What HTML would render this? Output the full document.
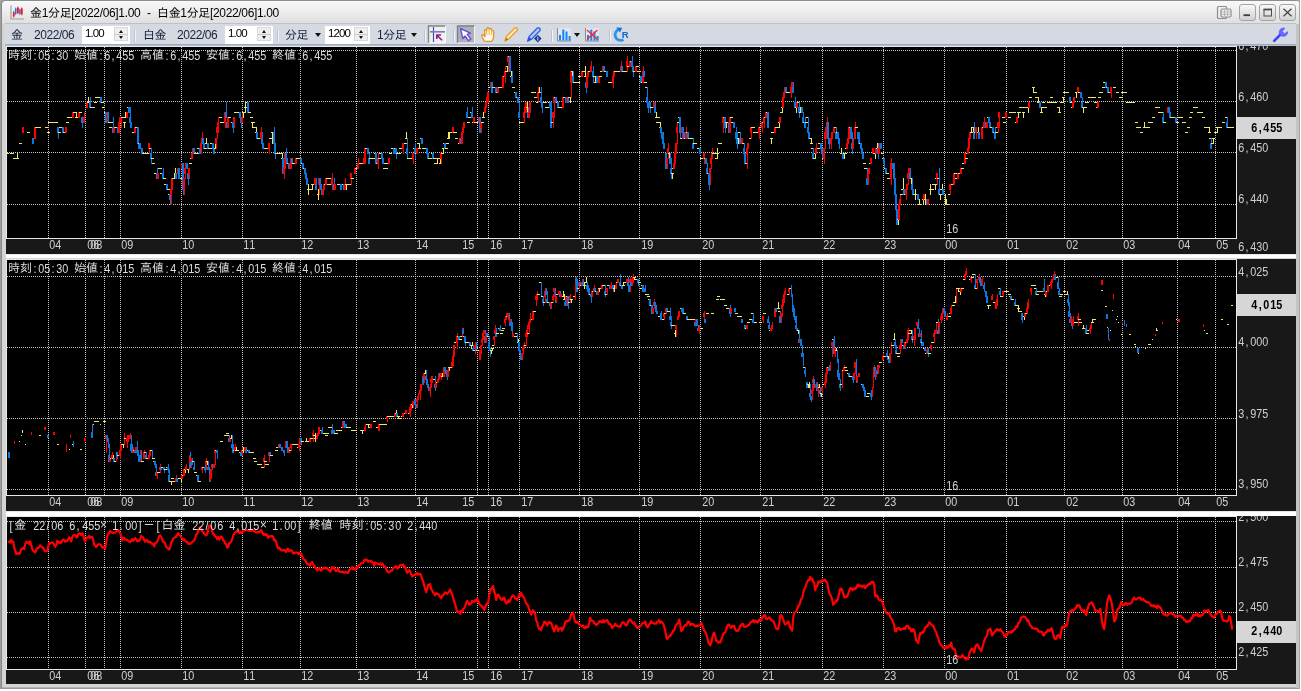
<!DOCTYPE html>
<html lang="ja"><head><meta charset="utf-8"><title>金1分足</title>
<style>
html,body{margin:0;padding:0}
body{width:1301px;height:691px;position:relative;overflow:hidden;background:#fff;font-family:"Liberation Sans","IPAGothic",sans-serif}
#win{position:absolute;left:0;top:0;width:1300px;height:689px;box-sizing:border-box;border-radius:5px 3px 0 0;background:#d4d4d4;box-shadow:inset 1px 0 0 #9e9e9e,inset 2px 0 0 #888,inset -1px 0 0 #a6a6a6,inset 0 1px 0 #8e8e8e,inset 0 -1px 0 #9a9a9a,inset 0 -2px 0 #b4b4b4}
#win2{position:absolute;left:1296px;top:24px;width:3px;height:664px;background:#c4c4c4}
.hsep{position:absolute;left:6px;width:1290px;height:4px;background:#fff;border-top:1px solid #e8e8e8;box-sizing:border-box}
#title{position:absolute;left:2px;top:1px;width:1297px;height:23px;background:linear-gradient(#f8f8f8,#efefef 40%,#dedede);border-radius:4px 2px 0 0}
#title .tx{position:absolute;left:30px;top:5px;font-size:12px;line-height:15px;color:#000;white-space:nowrap;letter-spacing:-0.34px}
#tb{position:absolute;left:5px;top:23px;width:1291px;height:20px;background:#d4d9e2;border-top:1px solid #bcc0c8;border-bottom:1px solid #9caac4;box-sizing:content-box}
#tbl{position:absolute;left:5px;top:45px;width:1291px;height:1px;background:#b4bed0}
.a{position:absolute}
.tx,.tbt,.spin span,.hd,.t,.tag{will-change:transform}
.clip{position:absolute;left:0;top:0;width:1301px;height:691px}
.tbt{position:absolute;top:28px;font-size:12px;line-height:14px;color:#1a2038;white-space:nowrap;letter-spacing:-0.45px}
.spin{position:absolute;top:26px;height:18px;background:#fff;box-sizing:border-box;font-size:11.5px;line-height:12px;letter-spacing:-0.9px;color:#000}
.spin span{position:absolute;left:3px;top:1px}
.spin i{position:absolute;right:2px;top:1px;width:14px;height:14px;background:#efefef;border:1px solid #d8d8d8;box-sizing:border-box}
.spin i:after{content:"";position:absolute;left:0;right:0;top:6px;height:1px;background:#c8c8c8}
.spin b{position:absolute;left:3.5px;width:0;height:0;border-left:2.5px solid transparent;border-right:2.5px solid transparent}
.spin b.u{top:1.5px;border-bottom:3.5px solid #111}
.spin b.d{top:7.5px;border-top:3.5px solid #111}
.sep{position:absolute;top:30px;width:1px;height:12px;background:#f2f4f8;box-shadow:-1px 0 0 #bcc2ce}
.dd{position:absolute;top:33px;width:0;height:0;border-left:3px solid transparent;border-right:3px solid transparent;border-top:4px solid #111}
.t{position:absolute;font-family:"Liberation Sans","IPAGothic",sans-serif;font-size:12px;color:#d0d0d0;line-height:12px;white-space:nowrap}
.t i,.hd i,.tag i{display:inline-block;width:6px;text-align:center;font-style:normal;transform:scaleX(0.9)}
.tag i{width:6.4px}
.tag{position:absolute;left:1237px;width:59px;height:22px;line-height:22px;text-align:center;font-family:"Liberation Sans","IPAGothic",sans-serif;font-size:12px;font-weight:bold;color:#000;white-space:nowrap}
.hd{position:absolute;left:7.5px;font-family:"Liberation Mono","IPAGothic",monospace;color:#dedede;line-height:13px;height:13px;white-space:pre;display:flex}
.hd .j{display:block;font-size:12px;overflow:visible;flex:none}
.hd .l{display:block;font-size:12px;flex:none;overflow:visible;font-family:"Liberation Sans","IPAGothic",sans-serif}
.wb{position:absolute;top:4px;width:17px;height:17px;box-sizing:border-box;border:1px solid #a4a4a4;border-radius:3px;background:linear-gradient(#f8f8f8,#e4e4e4 50%,#d2d2d2)}
</style></head><body>
<div class="a" style="left:0;top:0;width:8px;height:8px;background:#a4a4a4"></div><div class="a" style="left:1292px;top:0;width:8px;height:8px;background:#a4a4a4"></div><div id="win"></div><div id="win2"></div><div class="hsep" style="top:254px"></div><div class="hsep" style="top:511px;height:5px"></div>
<div id="title"><span class="tx" style="left:28px">金1分足[2022/06]1.00</span><span class="tx" style="left:145px">-</span><span class="tx" style="left:155px">白金1分足[2022/06]1.00</span></div>
<div id="tb"></div><div id="tbl"></div>
<span class="tbt" style="left:11px">金</span><span class="tbt" style="left:34px">2022/06</span>
<div class="spin" style="left:82px;width:48px"><span>1.00</span><i><b class="u"></b><b class="d"></b></i></div><span class="sep" style="left:135px"></span>
<span class="tbt" style="left:143px">白金</span><span class="tbt" style="left:177px">2022/06</span>
<div class="spin" style="left:225px;width:48px"><span>1.00</span><i><b class="u"></b><b class="d"></b></i></div><span class="sep" style="left:278px"></span>
<span class="tbt" style="left:285px">分足</span><span class="dd" style="left:315px"></span>
<div class="spin" style="left:325px;width:45px"><span>1200</span><i><b class="u"></b><b class="d"></b></i></div>
<span class="tbt" style="left:377px">1分足</span><span class="dd" style="left:411px"></span>
<span class="sep" style="left:425px"></span><span class="sep" style="left:454px"></span><span class="sep" style="left:552px"></span><span class="sep" style="left:610px"></span>
<span class="dd" style="left:574px"></span>
<svg class="a" style="left:0;top:0" width="1301" height="46" viewBox="0 0 1301 46">
<!-- app icon -->
<g>
<path d="M11 5.500V19H24" stroke="#a0a0a0" stroke-width="1.2" fill="none"/>
<path d="M13.8 10.5L14.700000000000001 12.7V15.8L13.8 18L12.9 15.8V12.7Z" fill="#ff1020"/><path d="M15.7 7L16.5 9.2V13.3L15.7 15.5L14.899999999999999 13.3V9.2Z" fill="#1080e8"/><path d="M17.9 6L18.849999999999998 8.2V12.3L17.9 14.5L16.95 12.3V8.2Z" fill="#ff1020"/><path d="M19.9 8L20.7 10.2V13.3L19.9 15.5L19.099999999999998 13.3V10.2Z" fill="#1080e8"/><path d="M21.8 7L22.75 9.2V13.600000000000001L21.8 15.8L20.85 13.600000000000001V9.2Z" fill="#ff1020"/>
</g>
<!-- window buttons -->
<g fill="none" stroke="#8e8e8e" stroke-width="1.2">
<rect x="1217.5" y="6.5" width="9" height="12" rx="1"/>
<rect x="1221" y="9" width="10" height="8" rx="1.5" fill="#ececec"/>
<path d="M1222 12H1230M1222 14.5H1230M1224.5 10V16M1227.5 10V16" stroke-width="0.5"/>
</g>
</svg>
<div class="wb" style="left:1239px"></div><div class="wb" style="left:1259px"></div><div class="wb" style="left:1279px"></div>
<svg class="a" style="left:0;top:0" width="1301" height="46" viewBox="0 0 1301 46">
<path d="M1243.5 15.2H1250" stroke="#3c3c3c" stroke-width="1.8"/>
<rect x="1264" y="9.5" width="7.500" height="6.5" fill="none" stroke="#4a4a4a" stroke-width="1"/><path d="M1263.5 9.5H1272" stroke="#4a4a4a" stroke-width="1.8"/>
<path d="M1283.5 8.8L1291.5 16.2M1291.5 8.8L1283.5 16.2" stroke="#444" stroke-width="1.25"/>
<!-- wrench -->
<g transform="translate(1273,27)">
<path d="M1.2 13.8 L8 7" stroke="#4040ff" stroke-width="2.6" stroke-linecap="round"/>
<path d="M11.8 1.2 A4.2 4.2 0 1 0 14.6 4.6 L11.6 6.8 L9.2 4.6 Z" fill="#6868ff" stroke="#4a4aff" stroke-width="0.6"/>
</g>
<!-- crosshair button -->
<g>
<rect x="428.5" y="26" width="17" height="17" fill="#f1f0e4"/>
<path d="M428.5 43V26H445.5" stroke="#80848c" stroke-width="1.4" fill="none"/>
<path d="M445.5 26V43H428.5" stroke="#fafafa" stroke-width="1" fill="none"/>
<path d="M433.5 27V42" stroke="#4848b8" stroke-width="1.2"/><path d="M430 31.8H445" stroke="#7878d0" stroke-width="1.6"/>
<path d="M436.5 35 H441 M436.8 34.6 V39 M437 35.2 L442 40.2" stroke="#9018a8" stroke-width="1.6" fill="none"/>
</g>
<!-- pointer button selected -->
<g>
<rect x="457.5" y="26" width="17" height="17" fill="#aeb1b6"/>
<path d="M457.5 43V26H474.500" stroke="#7c8088" stroke-width="1.4" fill="none"/>
<path d="M474.500 26V43H457.5" stroke="#f4f4f4" stroke-width="1" fill="none"/>
<path d="M460.5 28.5 L462.8 38.5 L465 36 L468.600 40.800 L470.800 39 L467.200 34.400 L470.400 33.200 Z" fill="#fff" stroke="#6a4cd8" stroke-width="1.4" stroke-linejoin="round"/>
</g>
<!-- hand -->
<g transform="translate(481,27)">
<path d="M3.400 14.200 C2 11.500 0.600 9.800 0.800 8.200 C1.600 7 3 8 4 9.600 L3.600 3.600 C3.700 2.200 5.400 2.200 5.600 3.600 L5.900 1.600 C6.200 0.300 7.800 0.300 8 1.600 L8.300 2.200 C8.800 1 10.300 1.200 10.400 2.600 L10.700 4 C11.300 3 12.700 3.400 12.700 4.800 L12.600 9.600 C12.500 12 11.600 13.400 10.800 14.400 Z" fill="#fff8ec" stroke="#e0921c" stroke-width="1.3" stroke-linejoin="round"/>
<path d="M5.700 3.800V8M8.100 2.400V8M10.500 3.600V8.200" stroke="#e8a848" stroke-width="0.9" fill="none"/>
</g>
<!-- pencil -->
<g transform="translate(504,27)">
<path d="M1 14 L2.400 9.600 L11 1 C12.300 0.200 14 1.800 13.200 3.200 L4.800 11.800 Z" fill="#fff4e0" stroke="#f0a028" stroke-width="1.5" stroke-linejoin="round"/>
<path d="M1 14 L2.200 10.400 L4.200 12.400Z" fill="#b07018"/>
</g>
<!-- marker -->
<g transform="translate(527,27)">
<path d="M0.600 14.200 L2.200 9.400 L10.400 1 C11.800 0 14 2 13 3.400 L5 11.800 Z" fill="#b8ccf8" stroke="#3468e0" stroke-width="1.5" stroke-linejoin="round"/>
<path d="M0.600 14.200 L2.200 10 L4.600 12.200Z" fill="#2050c0"/>
<path d="M10.800 7.800 L14.600 11.600 L10.800 15.400 L7 11.600Z" fill="#183c90"/><path d="M10.800 9.600V13.600" stroke="#dfe8ff" stroke-width="0.9"/>
</g>
<!-- bars icon -->
<g>
<rect x="557" y="28" width="14" height="13" fill="#e4e6ea"/>
<path d="M557.500 28V41H571" stroke="#8a8a8a" stroke-width="1" fill="none"/>
<path d="M560 40.500V35 M563.300 40.500V29.500 M566.500 40.500V31.500 M569.600 40.500V36" stroke="#1484ff" stroke-width="2"/>
</g>
<g>
<rect x="585" y="28" width="14" height="13" fill="#e4e6ea"/>
<path d="M585.500 28V41H599" stroke="#8a8a8a" stroke-width="1" fill="none"/>
<path d="M588 40.500V35 M591.300 40.500V29.500 M594.500 40.500V31.500 M597.600 40.500V36" stroke="#1484ff" stroke-width="2"/>
<path d="M587 30L597.500 39.500M597.500 30L587 39.500" stroke="#ff2828" stroke-width="1.4"/>
</g>
<!-- refresh -->
<g transform="translate(614,27)">
<path d="M9.500 12.600 A5.600 5.600 0 1 1 6.200 2.200" fill="none" stroke="#2696e8" stroke-width="2.800"/>
<path d="M2.200 0.400 L8.200 0.800 L6 5.400Z" fill="#2070e0"/>
<text x="7.800" y="11" font-family="Liberation Sans, sans-serif" font-weight="bold" font-size="9.500" fill="#1464c8">R</text>
</g>
</svg>

<svg width="1301" height="691" viewBox="0 0 1301 691" style="position:absolute;left:0;top:0;filter:blur(0.4px)" shape-rendering="crispEdges">
<rect x="6" y="46" width="1290" height="208" fill="#181818"/>
<rect x="6.5" y="46.5" width="1230" height="192" fill="#000" stroke="#e8e8e8" stroke-width="1"/>
<path d="M48.5 47V238M85.5 47V238M104.5 47V238M120.5 47V238M181.5 47V238M242.5 47V238M300.5 47V238M356.5 47V238M415.5 47V238M477.5 47V238M488.5 47V238M519.5 47V238M579.5 47V238M639.5 47V238M700.5 47V238M760.5 47V238M822.5 47V238M883.5 47V238M944.5 47V238M1006.5 47V238M1064.5 47V238M1122.5 47V238M1177.5 47V238M1215.5 47V238M7 50.5H1236M7 101.5H1236M7 152.5H1236M7 204.5H1236" stroke="#c4c4c4" stroke-width="1" stroke-dasharray="1 1" fill="none"/>
<rect x="6" y="259" width="1290" height="252" fill="#181818"/>
<rect x="6.5" y="259.5" width="1230" height="236" fill="#000" stroke="#e8e8e8" stroke-width="1"/>
<path d="M48.5 260V495M85.5 260V495M104.5 260V495M120.5 260V495M181.5 260V495M242.5 260V495M300.5 260V495M356.5 260V495M415.5 260V495M477.5 260V495M488.5 260V495M519.5 260V495M579.5 260V495M639.5 260V495M700.5 260V495M760.5 260V495M822.5 260V495M883.5 260V495M944.5 260V495M1006.5 260V495M1064.5 260V495M1122.5 260V495M1177.5 260V495M1215.5 260V495M7 276.5H1236M7 347.5H1236M7 418.5H1236M7 489.5H1236" stroke="#c4c4c4" stroke-width="1" stroke-dasharray="1 1" fill="none"/>
<rect x="6" y="516" width="1290" height="168" fill="#181818"/>
<rect x="6.5" y="516.5" width="1230" height="153" fill="#000" stroke="#e8e8e8" stroke-width="1"/>
<path d="M48.5 517V669M85.5 517V669M104.5 517V669M120.5 517V669M181.5 517V669M242.5 517V669M300.5 517V669M356.5 517V669M415.5 517V669M477.5 517V669M488.5 517V669M519.5 517V669M579.5 517V669M639.5 517V669M700.5 517V669M760.5 517V669M822.5 517V669M883.5 517V669M944.5 517V669M1006.5 517V669M1064.5 517V669M1122.5 517V669M1177.5 517V669M1215.5 517V669M7 521.5H1236M7 567.5H1236M7 612.5H1236M7 657.5H1236" stroke="#c4c4c4" stroke-width="1" stroke-dasharray="1 1" fill="none"/>
<path d="M6 153h3v1h-3zM10 153h3v1h-3zM11 153h3v1h-3zM13 158h3v1h-3zM14 158h3v1h-3zM17 153h1v6h-1zM16 158h3v1h-3zM19 143h3v1h-3z" fill="#f0e868"/><path d="M23 127h1v6h-1zM22 127h2v6h-2z" fill="#ff0000"/><path d="M27 132h3v1h-3z" fill="#f0e868"/><path d="M33 138h1v6h-1zM32 138h2v6h-2z" fill="#0a78e0"/><path d="M35 127h1v12h-1zM34 127h2v12h-2z" fill="#ff0000"/><path d="M35 127h3v1h-3zM37 127h3v1h-3zM38 127h3v1h-3zM45 127h3v1h-3zM47 132h3v1h-3zM48 122h3v1h-3zM51 122h3v1h-3zM52 122h3v1h-3zM53 122h3v1h-3zM54 122h3v1h-3zM55 122h3v1h-3z" fill="#f0e868"/><path d="M58 127h1v12h-1zM57 127h2v6h-2z" fill="#0a78e0"/><path d="M58 132h3v1h-3zM59 127h3v1h-3zM61 127h3v1h-3z" fill="#f0e868"/><path d="M63 127h1v6h-1zM62 127h2v6h-2z" fill="#0a78e0"/><path d="M63 132h3v1h-3zM64 132h3v1h-3z" fill="#f0e868"/><path d="M66 127h1v6h-1zM65 127h2v6h-2z" fill="#ff0000"/><path d="M66 122h3v1h-3zM67 117h3v1h-3zM68 117h3v1h-3zM69 117h3v1h-3zM70 117h3v1h-3zM71 117h3v1h-3z" fill="#f0e868"/><path d="M73 112h1v6h-1zM72 112h2v6h-2z" fill="#ff0000"/><path d="M73 112h3v1h-3zM76 112h1v6h-1zM75 117h3v1h-3z" fill="#f0e868"/><path d="M79 112h1v6h-1zM78 112h2v6h-2z" fill="#ff0000"/><path d="M79 112h3v1h-3z" fill="#f0e868"/><path d="M82 117h1v11h-1zM81 117h2v6h-2z" fill="#0a78e0"/><path d="M84 112h1v11h-1zM83 117h2v6h-2z" fill="#ff0000"/><path d="M85 107h3v1h-3z" fill="#f0e868"/><path d="M87 102h1v6h-1zM86 102h2v6h-2z" fill="#ff0000"/><path d="M88 97h1v6h-1zM87 102h3v1h-3zM88 102h3v1h-3z" fill="#f0e868"/><path d="M90 97h1v11h-1zM89 102h2v6h-2z" fill="#0a78e0"/><path d="M90 107h3v1h-3zM91 107h3v1h-3zM92 107h3v1h-3zM94 102h3v1h-3zM95 97h3v1h-3zM96 97h3v1h-3zM97 97h3v1h-3zM99 97h3v1h-3z" fill="#f0e868"/><path d="M101 97h1v6h-1zM100 97h2v6h-2z" fill="#0a78e0"/><path d="M101 102h3v1h-3zM102 107h3v1h-3zM104 112h3v1h-3z" fill="#f0e868"/><path d="M106 112h1v11h-1zM105 112h2v11h-2z" fill="#0a78e0"/><path d="M107 112h1v11h-1zM106 112h2v6h-2z" fill="#ff0000"/><path d="M108 112h1v11h-1zM107 112h2v6h-2z" fill="#0a78e0"/><path d="M108 122h3v1h-3zM109 127h3v1h-3zM110 122h3v1h-3zM111 122h3v1h-3z" fill="#f0e868"/><path d="M113 117h1v16h-1zM112 127h2v6h-2z" fill="#0a78e0"/><path d="M114 127h1v6h-1zM113 127h2v6h-2z" fill="#ff0000"/><path d="M114 127h3v1h-3zM116 127h3v1h-3z" fill="#f0e868"/><path d="M118 127h1v6h-1zM117 127h2v6h-2z" fill="#0a78e0"/><path d="M119 117h1v16h-1zM118 122h2v11h-2zM121 117h1v11h-1zM120 117h2v6h-2z" fill="#ff0000"/><path d="M121 117h3v1h-3zM124 122h1v6h-1zM123 122h3v1h-3zM125 112h1v6h-1zM124 117h3v1h-3zM125 117h3v1h-3z" fill="#f0e868"/><path d="M127 112h1v6h-1zM126 112h2v6h-2z" fill="#ff0000"/><path d="M127 107h3v1h-3z" fill="#f0e868"/><path d="M129 107h1v6h-1zM128 107h2v6h-2zM130 107h1v16h-1zM129 117h2v6h-2zM131 122h1v6h-1zM130 122h2v6h-2z" fill="#0a78e0"/><path d="M132 132h3v1h-3zM133 132h3v1h-3z" fill="#f0e868"/><path d="M135 127h1v6h-1zM134 127h2v6h-2z" fill="#ff0000"/><path d="M135 127h3v1h-3zM136 127h3v1h-3z" fill="#f0e868"/><path d="M138 127h1v22h-1zM137 127h2v17h-2z" fill="#0a78e0"/><path d="M138 143h3v1h-3z" fill="#f0e868"/><path d="M140 143h1v6h-1zM139 143h2v6h-2zM142 148h1v6h-1zM141 148h2v6h-2z" fill="#0a78e0"/><path d="M142 153h3v1h-3zM144 153h3v1h-3zM146 153h3v1h-3zM147 153h3v1h-3z" fill="#f0e868"/><path d="M149 143h1v11h-1zM148 143h2v6h-2z" fill="#ff0000"/><path d="M149 148h3v1h-3z" fill="#f0e868"/><path d="M151 148h1v16h-1zM150 153h2v6h-2z" fill="#0a78e0"/><path d="M151 158h3v1h-3zM152 163h3v1h-3zM154 173h3v1h-3z" fill="#f0e868"/><path d="M157 168h1v11h-1zM156 173h2v6h-2z" fill="#0a78e0"/><path d="M158 173h1v6h-1zM157 173h2v6h-2z" fill="#ff0000"/><path d="M158 168h3v1h-3zM159 168h3v1h-3zM160 173h3v1h-3zM161 173h3v1h-3z" fill="#f0e868"/><path d="M163 168h1v11h-1zM162 173h2v6h-2z" fill="#0a78e0"/><path d="M163 178h3v1h-3zM164 184h3v1h-3z" fill="#f0e868"/><path d="M167 184h1v6h-1zM166 184h2v6h-2z" fill="#0a78e0"/><path d="M167 189h3v1h-3zM168 194h3v1h-3z" fill="#f0e868"/><path d="M170 194h1v11h-1zM169 194h2v6h-2z" fill="#0a78e0"/><path d="M171 184h1v21h-1zM170 189h2v6h-2zM172 178h1v12h-1zM171 178h2v12h-2z" fill="#ff0000"/><path d="M172 178h3v1h-3zM174 173h1v6h-1zM173 178h3v1h-3zM175 168h1v6h-1zM174 173h3v1h-3z" fill="#f0e868"/><path d="M176 173h1v6h-1zM175 173h2v6h-2z" fill="#0a78e0"/><path d="M178 168h1v11h-1zM177 168h2v6h-2z" fill="#ff0000"/><path d="M179 168h1v11h-1zM178 168h2v11h-2z" fill="#0a78e0"/><path d="M180 178h3v1h-3z" fill="#f0e868"/><path d="M182 163h1v22h-1zM181 163h2v6h-2z" fill="#ff0000"/><path d="M183 163h1v32h-1zM182 163h2v27h-2z" fill="#0a78e0"/><path d="M184 178h1v17h-1zM183 178h2v12h-2zM185 168h1v11h-1zM184 168h2v6h-2zM186 163h1v6h-1zM185 163h2v6h-2z" fill="#ff0000"/><path d="M187 163h1v6h-1zM186 163h2v6h-2zM188 168h1v17h-1zM187 173h2v6h-2z" fill="#0a78e0"/><path d="M189 168h1v11h-1zM188 168h2v6h-2z" fill="#ff0000"/><path d="M189 163h3v1h-3zM190 158h3v1h-3z" fill="#f0e868"/><path d="M192 153h1v6h-1zM191 153h2v6h-2zM193 148h1v6h-1zM192 148h2v6h-2z" fill="#ff0000"/><path d="M194 148h1v6h-1zM193 148h2v6h-2z" fill="#0a78e0"/><path d="M194 153h3v1h-3zM195 153h3v1h-3zM196 153h3v1h-3zM197 148h3v1h-3z" fill="#f0e868"/><path d="M200 143h1v11h-1zM199 148h2v6h-2z" fill="#0a78e0"/><path d="M201 143h1v11h-1zM200 143h2v6h-2zM202 132h1v12h-1zM201 138h2v6h-2z" fill="#ff0000"/><path d="M203 138h1v6h-1zM202 138h2v6h-2zM204 143h1v6h-1zM203 143h2v6h-2z" fill="#0a78e0"/><path d="M204 148h3v1h-3zM206 138h1v6h-1zM205 143h3v1h-3z" fill="#f0e868"/><path d="M208 143h1v6h-1zM207 143h2v6h-2z" fill="#0a78e0"/><path d="M208 148h3v1h-3zM209 148h3v1h-3zM210 143h3v1h-3zM211 143h3v1h-3z" fill="#f0e868"/><path d="M213 143h1v6h-1zM212 143h2v6h-2zM214 148h1v6h-1zM213 148h2v6h-2z" fill="#0a78e0"/><path d="M215 143h1v6h-1zM214 148h3v1h-3z" fill="#f0e868"/><path d="M216 138h1v11h-1zM215 138h2v6h-2zM217 127h1v12h-1zM216 127h2v6h-2zM218 117h1v16h-1zM217 122h2v6h-2z" fill="#ff0000"/><path d="M219 117h3v1h-3zM220 122h3v1h-3zM221 122h3v1h-3zM222 122h3v1h-3zM223 122h3v1h-3z" fill="#f0e868"/><path d="M225 112h1v16h-1zM224 112h2v11h-2z" fill="#ff0000"/><path d="M226 102h1v16h-1zM225 112h2v6h-2zM227 117h1v11h-1zM226 122h2v6h-2z" fill="#0a78e0"/><path d="M228 117h1v11h-1zM227 117h2v11h-2z" fill="#ff0000"/><path d="M228 117h3v1h-3zM231 122h3v1h-3z" fill="#f0e868"/><path d="M233 122h1v11h-1zM232 122h2v6h-2z" fill="#0a78e0"/><path d="M234 117h1v11h-1zM233 117h2v6h-2z" fill="#ff0000"/><path d="M234 112h3v1h-3zM235 112h3v1h-3zM236 112h3v1h-3zM237 112h3v1h-3zM238 112h3v1h-3z" fill="#f0e868"/><path d="M240 112h1v6h-1zM239 112h2v6h-2zM241 117h1v11h-1zM240 117h2v6h-2z" fill="#0a78e0"/><path d="M242 112h1v11h-1zM241 117h2v6h-2z" fill="#ff0000"/><path d="M243 112h1v6h-1zM242 112h3v1h-3zM243 112h3v1h-3zM245 102h1v11h-1zM244 107h3v1h-3zM245 107h3v1h-3zM247 102h1v6h-1zM246 102h3v1h-3z" fill="#f0e868"/><path d="M248 102h1v11h-1zM247 102h2v11h-2z" fill="#0a78e0"/><path d="M248 112h3v1h-3zM250 117h3v1h-3zM252 122h1v6h-1zM251 122h3v1h-3zM252 122h3v1h-3zM253 127h3v1h-3zM254 127h3v1h-3zM256 127h1v12h-1zM255 132h3v1h-3z" fill="#f0e868"/><path d="M257 132h1v7h-1zM256 132h2v7h-2z" fill="#0a78e0"/><path d="M257 138h3v1h-3zM258 138h3v1h-3zM259 138h3v1h-3z" fill="#f0e868"/><path d="M261 127h1v17h-1zM260 132h2v7h-2z" fill="#ff0000"/><path d="M262 132h1v12h-1zM261 138h2v6h-2zM263 143h1v6h-1zM262 143h2v6h-2z" fill="#0a78e0"/><path d="M264 148h3v1h-3zM266 148h3v1h-3zM267 148h3v1h-3z" fill="#f0e868"/><path d="M269 143h1v11h-1zM268 143h2v6h-2z" fill="#ff0000"/><path d="M269 138h3v1h-3zM272 132h1v12h-1zM271 132h3v1h-3zM272 132h3v1h-3z" fill="#f0e868"/><path d="M274 127h1v17h-1zM273 132h2v12h-2zM275 143h1v16h-1zM274 143h2v11h-2z" fill="#0a78e0"/><path d="M275 153h3v1h-3zM277 153h3v1h-3zM280 153h3v1h-3zM282 153h1v6h-1zM281 158h3v1h-3z" fill="#f0e868"/><path d="M283 158h1v16h-1zM282 158h2v16h-2z" fill="#0a78e0"/><path d="M284 168h1v11h-1zM283 168h2v6h-2zM285 153h1v16h-1zM284 153h2v16h-2z" fill="#ff0000"/><path d="M286 148h1v11h-1zM285 153h2v6h-2zM287 158h1v6h-1zM286 158h2v6h-2z" fill="#0a78e0"/><path d="M288 163h1v6h-1zM287 163h3v1h-3z" fill="#f0e868"/><path d="M289 163h1v6h-1zM288 163h2v6h-2z" fill="#0a78e0"/><path d="M290 158h1v11h-1zM289 163h2v6h-2zM291 158h1v11h-1zM290 158h2v6h-2z" fill="#ff0000"/><path d="M292 158h1v6h-1zM291 158h2v6h-2z" fill="#0a78e0"/><path d="M292 163h3v1h-3zM293 163h3v1h-3z" fill="#f0e868"/><path d="M296 158h1v6h-1zM295 158h2v6h-2z" fill="#ff0000"/><path d="M296 158h3v1h-3zM298 158h3v1h-3zM299 158h3v1h-3z" fill="#f0e868"/><path d="M301 158h1v6h-1zM300 158h2v6h-2z" fill="#0a78e0"/><path d="M301 163h3v1h-3z" fill="#f0e868"/><path d="M303 163h1v6h-1zM302 163h2v6h-2z" fill="#0a78e0"/><path d="M303 168h3v1h-3z" fill="#f0e868"/><path d="M305 168h1v6h-1zM304 168h2v6h-2zM306 173h1v6h-1zM305 173h2v6h-2zM307 178h1v7h-1zM306 178h2v7h-2z" fill="#0a78e0"/><path d="M308 184h1v11h-1zM307 189h3v1h-3zM308 189h3v1h-3zM309 189h3v1h-3zM312 184h1v6h-1zM311 184h3v1h-3zM312 184h3v1h-3zM313 184h3v1h-3z" fill="#f0e868"/><path d="M315 178h1v7h-1zM314 178h2v7h-2z" fill="#ff0000"/><path d="M316 178h1v12h-1zM315 184h2v6h-2z" fill="#0a78e0"/><path d="M318 189h1v11h-1zM317 194h3v1h-3z" fill="#f0e868"/><path d="M319 178h1v17h-1zM318 178h2v7h-2z" fill="#ff0000"/><path d="M320 178h1v7h-1zM319 178h2v7h-2zM321 184h1v6h-1zM320 184h2v6h-2zM322 189h1v6h-1zM321 189h2v6h-2z" fill="#0a78e0"/><path d="M323 189h1v6h-1zM322 189h2v6h-2zM324 184h1v6h-1zM323 184h2v6h-2z" fill="#ff0000"/><path d="M324 184h3v1h-3z" fill="#f0e868"/><path d="M326 178h1v7h-1zM325 178h2v7h-2z" fill="#ff0000"/><path d="M326 178h3v1h-3zM327 184h3v1h-3zM328 184h3v1h-3zM329 178h3v1h-3z" fill="#f0e868"/><path d="M332 173h1v17h-1zM331 178h2v7h-2z" fill="#ff0000"/><path d="M334 178h1v12h-1zM333 184h2v6h-2z" fill="#0a78e0"/><path d="M335 184h1v6h-1zM334 184h2v6h-2z" fill="#ff0000"/><path d="M337 184h3v1h-3zM338 184h3v1h-3z" fill="#f0e868"/><path d="M341 184h1v6h-1zM340 184h2v6h-2z" fill="#0a78e0"/><path d="M342 184h3v1h-3z" fill="#f0e868"/><path d="M344 184h1v6h-1zM343 184h2v6h-2z" fill="#0a78e0"/><path d="M345 178h1v12h-1zM344 184h2v6h-2z" fill="#ff0000"/><path d="M346 184h1v6h-1zM345 184h3v1h-3zM347 184h3v1h-3zM348 184h3v1h-3zM349 184h3v1h-3z" fill="#f0e868"/><path d="M351 173h1v12h-1zM350 173h2v6h-2z" fill="#ff0000"/><path d="M351 178h3v1h-3z" fill="#f0e868"/><path d="M355 168h1v6h-1zM354 168h2v6h-2z" fill="#ff0000"/><path d="M355 168h3v1h-3zM356 168h3v1h-3z" fill="#f0e868"/><path d="M358 158h1v11h-1zM357 163h2v6h-2z" fill="#ff0000"/><path d="M359 163h3v1h-3zM360 163h3v1h-3zM362 163h3v1h-3z" fill="#f0e868"/><path d="M364 158h1v6h-1zM363 158h2v6h-2zM365 148h1v16h-1zM364 148h2v11h-2z" fill="#ff0000"/><path d="M365 148h3v1h-3zM366 148h3v1h-3z" fill="#f0e868"/><path d="M368 148h1v6h-1zM367 148h2v6h-2zM369 153h1v11h-1zM368 158h2v6h-2z" fill="#0a78e0"/><path d="M369 158h3v1h-3zM371 158h3v1h-3zM372 158h3v1h-3zM373 158h3v1h-3zM374 153h3v1h-3z" fill="#f0e868"/><path d="M376 153h1v11h-1zM375 153h2v11h-2z" fill="#0a78e0"/><path d="M376 163h3v1h-3z" fill="#f0e868"/><path d="M378 153h1v16h-1zM377 158h2v6h-2z" fill="#ff0000"/><path d="M378 158h3v1h-3zM379 153h3v1h-3zM380 153h3v1h-3z" fill="#f0e868"/><path d="M382 153h1v6h-1zM381 153h2v6h-2zM383 158h1v6h-1zM382 158h2v6h-2z" fill="#0a78e0"/><path d="M383 168h3v1h-3zM384 163h3v1h-3zM385 168h3v1h-3zM388 158h1v6h-1zM387 163h3v1h-3z" fill="#f0e868"/><path d="M389 158h1v6h-1zM388 158h2v6h-2z" fill="#ff0000"/><path d="M389 153h3v1h-3zM391 148h3v1h-3z" fill="#f0e868"/><path d="M394 148h1v6h-1zM393 148h2v6h-2z" fill="#0a78e0"/><path d="M394 148h3v1h-3z" fill="#f0e868"/><path d="M396 148h1v11h-1zM395 148h2v6h-2z" fill="#0a78e0"/><path d="M396 153h3v1h-3zM398 153h3v1h-3zM399 148h3v1h-3zM400 148h3v1h-3z" fill="#f0e868"/><path d="M403 143h1v11h-1zM402 143h2v6h-2z" fill="#ff0000"/><path d="M404 143h3v1h-3zM406 132h1v7h-1zM405 138h3v1h-3z" fill="#f0e868"/><path d="M407 138h1v21h-1zM406 148h2v6h-2z" fill="#0a78e0"/><path d="M407 158h3v1h-3zM408 158h3v1h-3zM409 158h3v1h-3zM411 158h3v1h-3z" fill="#f0e868"/><path d="M413 153h1v11h-1zM412 153h2v6h-2z" fill="#ff0000"/><path d="M413 148h3v1h-3z" fill="#f0e868"/><path d="M415 143h1v16h-1zM414 148h2v6h-2z" fill="#0a78e0"/><path d="M415 153h3v1h-3z" fill="#f0e868"/><path d="M417 148h1v6h-1zM416 148h2v6h-2z" fill="#ff0000"/><path d="M417 143h3v1h-3zM419 143h1v6h-1zM418 148h3v1h-3zM420 138h3v1h-3z" fill="#f0e868"/><path d="M422 138h1v6h-1zM421 138h2v6h-2z" fill="#0a78e0"/><path d="M422 148h3v1h-3zM423 148h3v1h-3zM424 148h3v1h-3zM425 148h3v1h-3z" fill="#f0e868"/><path d="M427 148h1v11h-1zM426 148h2v6h-2zM428 153h1v6h-1zM427 153h2v6h-2z" fill="#0a78e0"/><path d="M428 158h3v1h-3zM429 158h3v1h-3zM431 153h3v1h-3z" fill="#f0e868"/><path d="M433 153h1v6h-1zM432 153h2v6h-2z" fill="#0a78e0"/><path d="M433 158h3v1h-3zM434 163h3v1h-3zM435 163h3v1h-3zM437 158h1v6h-1zM436 158h3v1h-3zM437 158h3v1h-3zM440 158h1v6h-1zM439 163h3v1h-3z" fill="#f0e868"/><path d="M441 153h1v11h-1zM440 153h2v6h-2z" fill="#ff0000"/><path d="M441 153h3v1h-3zM443 148h1v6h-1zM442 148h3v1h-3zM443 143h3v1h-3z" fill="#f0e868"/><path d="M445 143h1v6h-1zM444 143h2v6h-2z" fill="#0a78e0"/><path d="M445 148h3v1h-3zM446 143h3v1h-3zM448 132h1v7h-1zM447 138h3v1h-3zM449 132h1v7h-1zM448 132h3v1h-3zM449 132h3v1h-3z" fill="#f0e868"/><path d="M453 127h1v6h-1zM452 127h2v6h-2z" fill="#ff0000"/><path d="M453 132h3v1h-3zM454 132h3v1h-3zM455 138h3v1h-3zM458 143h3v1h-3z" fill="#f0e868"/><path d="M460 138h1v6h-1zM459 138h2v6h-2z" fill="#ff0000"/><path d="M461 138h1v6h-1zM460 138h2v6h-2z" fill="#0a78e0"/><path d="M462 127h1v17h-1zM461 132h2v12h-2zM463 127h1v6h-1zM462 127h2v6h-2zM464 122h1v6h-1zM463 122h2v6h-2z" fill="#ff0000"/><path d="M467 107h1v11h-1zM466 112h2v6h-2z" fill="#0a78e0"/><path d="M467 122h3v1h-3zM468 117h3v1h-3zM469 117h3v1h-3zM470 112h3v1h-3z" fill="#f0e868"/><path d="M472 107h1v11h-1zM471 112h2v6h-2z" fill="#0a78e0"/><path d="M472 122h3v1h-3z" fill="#f0e868"/><path d="M474 117h1v6h-1zM473 117h2v6h-2z" fill="#ff0000"/><path d="M474 122h3v1h-3zM475 122h3v1h-3zM476 122h3v1h-3z" fill="#f0e868"/><path d="M479 117h1v6h-1zM478 117h2v6h-2z" fill="#ff0000"/><path d="M480 117h1v16h-1zM479 117h2v16h-2z" fill="#0a78e0"/><path d="M481 122h1v11h-1zM480 122h2v6h-2z" fill="#ff0000"/><path d="M481 122h3v1h-3zM483 112h1v6h-1zM482 117h3v1h-3z" fill="#f0e868"/><path d="M485 102h1v11h-1zM484 107h2v6h-2zM486 102h1v6h-1zM485 102h2v6h-2zM487 97h1v6h-1zM486 97h2v6h-2zM488 92h1v11h-1zM487 92h2v6h-2z" fill="#ff0000"/><path d="M488 87h3v1h-3zM489 87h3v1h-3z" fill="#f0e868"/><path d="M491 82h1v6h-1zM490 82h2v6h-2z" fill="#ff0000"/><path d="M492 82h1v11h-1zM491 82h2v11h-2z" fill="#0a78e0"/><path d="M492 87h3v1h-3zM493 87h3v1h-3zM494 87h3v1h-3z" fill="#f0e868"/><path d="M496 87h1v6h-1zM495 87h2v6h-2z" fill="#0a78e0"/><path d="M496 92h3v1h-3z" fill="#f0e868"/><path d="M498 87h1v6h-1zM497 87h2v6h-2z" fill="#ff0000"/><path d="M498 87h3v1h-3zM499 87h3v1h-3zM500 87h3v1h-3zM501 87h3v1h-3z" fill="#f0e868"/><path d="M503 76h1v12h-1zM502 76h2v12h-2z" fill="#ff0000"/><path d="M503 76h3v1h-3z" fill="#f0e868"/><path d="M505 66h1v17h-1zM504 71h2v6h-2z" fill="#ff0000"/><path d="M505 71h3v1h-3zM507 66h1v6h-1zM506 66h3v1h-3z" fill="#f0e868"/><path d="M508 56h1v16h-1zM507 56h2v6h-2z" fill="#ff0000"/><path d="M508 56h3v1h-3z" fill="#f0e868"/><path d="M510 56h1v16h-1zM509 56h2v16h-2z" fill="#0a78e0"/><path d="M511 71h1v6h-1zM510 76h3v1h-3z" fill="#f0e868"/><path d="M512 71h1v12h-1zM511 76h2v7h-2z" fill="#0a78e0"/><path d="M512 87h3v1h-3zM514 92h3v1h-3z" fill="#f0e868"/><path d="M516 92h1v6h-1zM515 92h2v6h-2z" fill="#0a78e0"/><path d="M516 97h3v1h-3z" fill="#f0e868"/><path d="M518 97h1v6h-1zM517 97h2v6h-2zM519 102h1v16h-1zM518 112h2v6h-2z" fill="#0a78e0"/><path d="M519 122h3v1h-3zM520 122h3v1h-3zM521 122h3v1h-3zM522 122h3v1h-3z" fill="#f0e868"/><path d="M524 107h1v16h-1zM523 112h2v6h-2zM525 107h1v6h-1zM524 107h2v6h-2zM526 102h1v11h-1zM525 102h2v6h-2z" fill="#ff0000"/><path d="M527 102h1v11h-1zM526 107h3v1h-3z" fill="#f0e868"/><path d="M528 107h1v11h-1zM527 112h2v6h-2z" fill="#0a78e0"/><path d="M529 112h1v6h-1zM528 112h2v6h-2zM530 102h1v11h-1zM529 102h2v11h-2z" fill="#ff0000"/><path d="M531 92h3v1h-3zM532 92h3v1h-3zM533 92h3v1h-3zM534 97h3v1h-3zM535 97h3v1h-3zM536 102h3v1h-3z" fill="#f0e868"/><path d="M538 87h1v16h-1zM537 92h2v6h-2z" fill="#ff0000"/><path d="M539 87h1v6h-1zM538 92h3v1h-3zM539 92h3v1h-3z" fill="#f0e868"/><path d="M541 87h1v21h-1zM540 97h2v6h-2zM542 102h1v11h-1zM541 102h2v6h-2z" fill="#0a78e0"/><path d="M543 102h3v1h-3zM544 102h3v1h-3zM545 107h3v1h-3zM547 107h3v1h-3zM548 102h3v1h-3z" fill="#f0e868"/><path d="M550 102h1v6h-1zM549 102h2v6h-2zM551 102h1v26h-1zM550 107h2v21h-2z" fill="#0a78e0"/><path d="M551 122h3v1h-3z" fill="#f0e868"/><path d="M553 112h1v16h-1zM552 112h2v6h-2zM554 97h1v21h-1zM553 97h2v6h-2z" fill="#ff0000"/><path d="M554 97h3v1h-3z" fill="#f0e868"/><path d="M556 97h1v6h-1zM555 97h2v6h-2z" fill="#0a78e0"/><path d="M556 102h3v1h-3z" fill="#f0e868"/><path d="M558 102h1v6h-1zM557 102h2v6h-2z" fill="#0a78e0"/><path d="M558 107h3v1h-3zM559 107h3v1h-3zM561 107h3v1h-3z" fill="#f0e868"/><path d="M563 97h1v11h-1zM562 97h2v11h-2z" fill="#ff0000"/><path d="M563 97h3v1h-3z" fill="#f0e868"/><path d="M566 97h1v6h-1zM565 97h2v6h-2z" fill="#0a78e0"/><path d="M567 97h1v6h-1zM566 97h2v6h-2z" fill="#ff0000"/><path d="M568 97h1v6h-1zM567 97h2v6h-2z" fill="#0a78e0"/><path d="M568 97h3v1h-3zM570 97h1v6h-1zM569 97h3v1h-3z" fill="#f0e868"/><path d="M571 71h1v27h-1zM570 71h2v12h-2z" fill="#ff0000"/><path d="M572 71h1v6h-1zM571 71h3v1h-3z" fill="#f0e868"/><path d="M573 71h1v12h-1zM572 76h2v7h-2z" fill="#0a78e0"/><path d="M573 82h3v1h-3zM574 82h3v1h-3zM576 82h3v1h-3zM577 82h3v1h-3zM578 76h3v1h-3zM579 76h3v1h-3zM580 76h3v1h-3z" fill="#f0e868"/><path d="M582 71h1v6h-1zM581 71h2v6h-2z" fill="#ff0000"/><path d="M582 71h3v1h-3zM585 66h1v11h-1zM584 76h3v1h-3z" fill="#f0e868"/><path d="M586 76h1v17h-1zM585 82h2v6h-2z" fill="#0a78e0"/><path d="M587 76h1v12h-1zM586 76h2v12h-2zM588 71h1v6h-1zM587 71h2v6h-2z" fill="#ff0000"/><path d="M588 71h3v1h-3zM589 71h3v1h-3z" fill="#f0e868"/><path d="M591 61h1v11h-1zM590 66h2v6h-2z" fill="#ff0000"/><path d="M593 66h1v17h-1zM592 71h2v6h-2z" fill="#0a78e0"/><path d="M593 76h3v1h-3zM595 76h1v7h-1zM594 82h3v1h-3zM595 76h3v1h-3z" fill="#f0e868"/><path d="M597 76h1v7h-1zM596 76h2v7h-2z" fill="#0a78e0"/><path d="M599 76h1v7h-1zM598 76h2v7h-2z" fill="#ff0000"/><path d="M599 76h3v1h-3zM600 71h3v1h-3zM601 71h3v1h-3z" fill="#f0e868"/><path d="M603 66h1v6h-1zM602 66h2v6h-2z" fill="#ff0000"/><path d="M604 66h1v6h-1zM603 66h2v6h-2z" fill="#0a78e0"/><path d="M604 71h3v1h-3zM605 71h3v1h-3z" fill="#f0e868"/><path d="M607 71h1v6h-1zM606 71h2v6h-2z" fill="#0a78e0"/><path d="M608 82h3v1h-3zM609 82h3v1h-3zM610 82h3v1h-3zM611 82h3v1h-3z" fill="#f0e868"/><path d="M613 76h1v12h-1zM612 76h2v7h-2zM614 71h1v6h-1zM613 71h2v6h-2z" fill="#ff0000"/><path d="M614 71h3v1h-3zM615 71h3v1h-3zM616 71h3v1h-3zM617 71h3v1h-3zM619 71h3v1h-3z" fill="#f0e868"/><path d="M621 61h1v11h-1zM620 66h2v6h-2z" fill="#ff0000"/><path d="M622 66h1v6h-1zM621 66h2v6h-2z" fill="#0a78e0"/><path d="M622 71h3v1h-3zM624 71h3v1h-3zM625 71h3v1h-3z" fill="#f0e868"/><path d="M627 56h1v16h-1zM626 61h2v6h-2z" fill="#ff0000"/><path d="M627 66h3v1h-3zM628 66h3v1h-3z" fill="#f0e868"/><path d="M630 61h1v6h-1zM629 61h2v6h-2z" fill="#ff0000"/><path d="M630 61h3v1h-3z" fill="#f0e868"/><path d="M632 56h1v11h-1zM631 61h2v6h-2zM633 66h1v11h-1zM632 66h2v6h-2z" fill="#0a78e0"/><path d="M633 71h3v1h-3zM634 71h3v1h-3z" fill="#f0e868"/><path d="M636 66h1v6h-1zM635 66h2v6h-2z" fill="#ff0000"/><path d="M636 66h3v1h-3zM637 71h3v1h-3zM638 71h3v1h-3zM639 76h3v1h-3z" fill="#f0e868"/><path d="M641 76h1v7h-1zM640 76h2v7h-2z" fill="#0a78e0"/><path d="M641 82h3v1h-3z" fill="#f0e868"/><path d="M643 66h1v17h-1zM642 71h2v12h-2z" fill="#ff0000"/><path d="M644 71h1v6h-1zM643 71h2v6h-2z" fill="#0a78e0"/><path d="M644 82h3v1h-3zM645 87h3v1h-3z" fill="#f0e868"/><path d="M647 87h1v16h-1zM646 97h2v6h-2zM648 102h1v11h-1zM647 102h2v6h-2zM650 102h1v11h-1zM649 102h2v6h-2z" fill="#0a78e0"/><path d="M650 107h3v1h-3zM651 107h3v1h-3zM652 107h3v1h-3z" fill="#f0e868"/><path d="M654 102h1v6h-1zM653 102h2v6h-2z" fill="#ff0000"/><path d="M655 102h1v11h-1zM654 107h2v6h-2z" fill="#0a78e0"/><path d="M656 112h1v6h-1zM655 117h3v1h-3zM656 122h3v1h-3zM657 117h3v1h-3zM658 122h3v1h-3zM660 122h1v11h-1zM659 127h3v1h-3z" fill="#f0e868"/><path d="M661 127h1v6h-1zM660 127h2v6h-2zM662 132h1v7h-1zM661 132h2v7h-2zM663 132h1v12h-1zM662 138h2v6h-2zM664 143h1v6h-1zM663 143h2v6h-2zM666 153h1v16h-1zM665 153h2v16h-2z" fill="#0a78e0"/><path d="M667 158h1v11h-1zM666 158h2v6h-2zM668 143h1v16h-1zM667 148h2v6h-2z" fill="#ff0000"/><path d="M669 153h1v6h-1zM668 153h3v1h-3z" fill="#f0e868"/><path d="M670 153h1v11h-1zM669 158h2v6h-2zM671 158h1v21h-1zM670 168h2v6h-2z" fill="#0a78e0"/><path d="M672 173h1v6h-1zM671 173h3v1h-3zM672 168h3v1h-3z" fill="#f0e868"/><path d="M674 163h1v6h-1zM673 163h2v6h-2zM675 148h1v16h-1zM674 153h2v11h-2zM676 143h1v11h-1zM675 143h2v6h-2zM677 122h1v22h-1zM676 127h2v6h-2z" fill="#ff0000"/><path d="M677 122h3v1h-3zM679 117h1v6h-1zM678 117h3v1h-3z" fill="#f0e868"/><path d="M680 117h1v22h-1zM679 117h2v16h-2z" fill="#0a78e0"/><path d="M680 138h3v1h-3z" fill="#f0e868"/><path d="M682 127h1v12h-1zM681 127h2v6h-2z" fill="#ff0000"/><path d="M683 127h1v6h-1zM682 127h2v6h-2zM684 132h1v7h-1zM683 132h2v7h-2z" fill="#0a78e0"/><path d="M684 138h3v1h-3z" fill="#f0e868"/><path d="M686 127h1v12h-1zM685 132h2v7h-2z" fill="#ff0000"/><path d="M686 132h3v1h-3z" fill="#f0e868"/><path d="M688 132h1v7h-1zM687 132h2v7h-2z" fill="#0a78e0"/><path d="M688 138h3v1h-3zM689 138h3v1h-3zM690 138h3v1h-3zM691 138h3v1h-3z" fill="#f0e868"/><path d="M693 138h1v11h-1zM692 143h2v6h-2z" fill="#0a78e0"/><path d="M693 143h3v1h-3zM694 143h3v1h-3zM697 148h3v1h-3zM698 148h3v1h-3z" fill="#f0e868"/><path d="M700 148h1v6h-1zM699 148h2v6h-2z" fill="#0a78e0"/><path d="M700 158h3v1h-3z" fill="#f0e868"/><path d="M704 153h1v11h-1zM703 153h2v6h-2z" fill="#ff0000"/><path d="M704 158h3v1h-3z" fill="#f0e868"/><path d="M706 158h1v6h-1zM705 158h2v6h-2zM707 163h1v11h-1zM706 168h2v6h-2z" fill="#0a78e0"/><path d="M708 173h1v6h-1zM707 173h3v1h-3z" fill="#f0e868"/><path d="M709 173h1v17h-1zM708 173h2v12h-2z" fill="#0a78e0"/><path d="M710 168h1v17h-1zM709 168h2v6h-2zM711 158h1v11h-1zM710 158h2v6h-2zM712 148h1v11h-1zM711 153h2v6h-2z" fill="#ff0000"/><path d="M712 153h3v1h-3zM713 153h3v1h-3zM714 153h3v1h-3zM715 158h3v1h-3zM717 148h1v11h-1zM716 153h3v1h-3zM718 143h3v1h-3zM719 143h3v1h-3z" fill="#f0e868"/><path d="M723 117h1v16h-1zM722 117h2v6h-2z" fill="#ff0000"/><path d="M723 117h3v1h-3z" fill="#f0e868"/><path d="M725 117h1v16h-1zM724 117h2v11h-2z" fill="#0a78e0"/><path d="M726 122h1v6h-1zM725 122h3v1h-3zM726 122h3v1h-3z" fill="#f0e868"/><path d="M729 122h1v11h-1zM728 122h2v11h-2z" fill="#0a78e0"/><path d="M730 117h1v16h-1zM729 117h2v16h-2z" fill="#ff0000"/><path d="M730 117h3v1h-3zM731 122h3v1h-3z" fill="#f0e868"/><path d="M734 122h1v6h-1zM733 122h2v6h-2zM736 127h1v17h-1zM735 132h2v7h-2zM737 132h1v17h-1zM736 138h2v6h-2z" fill="#0a78e0"/><path d="M738 138h1v6h-1zM737 138h3v1h-3zM738 132h3v1h-3z" fill="#f0e868"/><path d="M740 132h1v12h-1zM739 138h2v6h-2z" fill="#0a78e0"/><path d="M742 138h1v6h-1zM741 138h2v6h-2z" fill="#ff0000"/><path d="M742 143h3v1h-3z" fill="#f0e868"/><path d="M744 143h1v16h-1zM743 148h2v6h-2zM745 153h1v11h-1zM744 153h2v11h-2z" fill="#0a78e0"/><path d="M745 163h3v1h-3z" fill="#f0e868"/><path d="M747 148h1v21h-1zM746 148h2v6h-2zM748 143h1v6h-1zM747 143h2v6h-2z" fill="#ff0000"/><path d="M749 138h3v1h-3z" fill="#f0e868"/><path d="M751 127h1v12h-1zM750 127h2v6h-2z" fill="#ff0000"/><path d="M751 127h3v1h-3zM752 127h3v1h-3zM753 132h3v1h-3zM754 132h3v1h-3zM755 132h3v1h-3zM757 132h3v1h-3z" fill="#f0e868"/><path d="M759 127h1v12h-1zM758 127h2v6h-2z" fill="#ff0000"/><path d="M759 127h3v1h-3zM760 127h3v1h-3z" fill="#f0e868"/><path d="M762 122h1v11h-1zM761 122h2v6h-2z" fill="#ff0000"/><path d="M762 122h3v1h-3z" fill="#f0e868"/><path d="M764 117h1v11h-1zM763 117h2v6h-2z" fill="#ff0000"/><path d="M764 117h3v1h-3z" fill="#f0e868"/><path d="M766 112h1v6h-1zM765 112h2v6h-2z" fill="#ff0000"/><path d="M766 112h3v1h-3z" fill="#f0e868"/><path d="M768 112h1v16h-1zM767 112h2v16h-2z" fill="#0a78e0"/><path d="M771 138h1v6h-1zM770 138h3v1h-3zM771 132h3v1h-3zM772 132h3v1h-3z" fill="#f0e868"/><path d="M775 127h1v6h-1zM774 127h2v6h-2z" fill="#ff0000"/><path d="M775 127h3v1h-3zM776 127h3v1h-3zM777 127h3v1h-3zM779 122h1v6h-1zM778 122h3v1h-3z" fill="#f0e868"/><path d="M780 117h1v6h-1zM779 117h2v6h-2z" fill="#ff0000"/><path d="M780 112h3v1h-3zM782 107h1v6h-1zM781 107h3v1h-3z" fill="#f0e868"/><path d="M783 97h1v11h-1zM782 97h2v11h-2zM784 92h1v6h-1zM783 92h2v6h-2zM785 87h1v6h-1zM784 87h2v6h-2z" fill="#ff0000"/><path d="M786 87h1v6h-1zM785 87h2v6h-2z" fill="#0a78e0"/><path d="M786 92h3v1h-3zM787 92h3v1h-3zM788 92h3v1h-3zM789 92h3v1h-3z" fill="#f0e868"/><path d="M791 82h1v16h-1zM790 87h2v6h-2zM792 82h1v6h-1zM791 82h2v6h-2z" fill="#ff0000"/><path d="M793 82h1v11h-1zM792 87h2v6h-2zM795 97h1v11h-1zM794 102h2v6h-2z" fill="#0a78e0"/><path d="M796 102h1v11h-1zM795 107h3v1h-3z" fill="#f0e868"/><path d="M797 102h1v6h-1zM796 102h2v6h-2z" fill="#ff0000"/><path d="M797 102h3v1h-3z" fill="#f0e868"/><path d="M799 102h1v16h-1zM798 107h2v6h-2z" fill="#0a78e0"/><path d="M800 107h1v6h-1zM799 112h3v1h-3zM800 107h3v1h-3z" fill="#f0e868"/><path d="M802 107h1v6h-1zM801 107h2v6h-2zM803 112h1v11h-1zM802 117h2v6h-2z" fill="#0a78e0"/><path d="M803 122h3v1h-3z" fill="#f0e868"/><path d="M805 117h1v11h-1zM804 122h2v6h-2z" fill="#0a78e0"/><path d="M805 122h3v1h-3zM806 117h3v1h-3z" fill="#f0e868"/><path d="M808 117h1v16h-1zM807 127h2v6h-2zM809 132h1v7h-1zM808 132h2v7h-2z" fill="#0a78e0"/><path d="M809 138h3v1h-3zM811 138h1v6h-1zM810 143h3v1h-3zM811 148h3v1h-3z" fill="#f0e868"/><path d="M813 148h1v11h-1zM812 153h2v6h-2z" fill="#0a78e0"/><path d="M813 158h3v1h-3zM815 148h1v11h-1zM814 153h3v1h-3z" fill="#f0e868"/><path d="M816 143h1v11h-1zM815 148h2v6h-2z" fill="#ff0000"/><path d="M817 148h3v1h-3zM818 143h3v1h-3zM819 143h3v1h-3z" fill="#f0e868"/><path d="M821 143h1v6h-1zM820 143h2v6h-2zM822 148h1v11h-1zM821 148h2v6h-2z" fill="#0a78e0"/><path d="M822 158h3v1h-3z" fill="#f0e868"/><path d="M824 148h1v16h-1zM823 148h2v11h-2zM825 127h1v22h-1zM824 132h2v7h-2zM826 127h1v12h-1zM825 127h2v6h-2zM827 117h1v11h-1zM826 122h2v6h-2z" fill="#ff0000"/><path d="M828 122h1v17h-1zM827 122h2v17h-2zM829 138h1v11h-1zM828 138h2v6h-2z" fill="#0a78e0"/><path d="M831 138h1v11h-1zM830 138h2v6h-2zM832 132h1v7h-1zM831 132h2v7h-2zM834 127h1v6h-1zM833 127h2v6h-2z" fill="#ff0000"/><path d="M834 127h3v1h-3z" fill="#f0e868"/><path d="M836 127h1v12h-1zM835 132h2v7h-2z" fill="#0a78e0"/><path d="M836 132h3v1h-3z" fill="#f0e868"/><path d="M838 132h1v7h-1zM837 132h2v7h-2zM839 138h1v11h-1zM838 138h2v6h-2z" fill="#0a78e0"/><path d="M841 148h1v6h-1zM840 153h3v1h-3z" fill="#f0e868"/><path d="M843 153h1v6h-1zM842 153h2v6h-2z" fill="#0a78e0"/><path d="M844 153h1v6h-1zM843 153h3v1h-3zM844 153h3v1h-3zM845 148h3v1h-3z" fill="#f0e868"/><path d="M847 143h1v6h-1zM846 143h2v6h-2zM848 138h1v6h-1zM847 138h2v6h-2zM849 127h1v12h-1zM848 127h2v12h-2z" fill="#ff0000"/><path d="M849 127h3v1h-3z" fill="#f0e868"/><path d="M851 127h1v12h-1zM850 127h2v12h-2zM852 132h1v22h-1zM851 143h2v6h-2z" fill="#0a78e0"/><path d="M853 138h1v11h-1zM852 143h2v6h-2zM855 122h1v17h-1zM854 127h2v12h-2z" fill="#ff0000"/><path d="M855 127h3v1h-3z" fill="#f0e868"/><path d="M858 132h1v7h-1zM857 132h2v7h-2zM859 132h1v12h-1zM858 138h2v6h-2z" fill="#0a78e0"/><path d="M859 143h3v1h-3z" fill="#f0e868"/><path d="M861 143h1v6h-1zM860 143h2v6h-2zM862 148h1v6h-1zM861 148h2v6h-2zM863 153h1v6h-1zM862 153h2v6h-2z" fill="#0a78e0"/><path d="M863 163h3v1h-3zM864 168h3v1h-3zM865 168h3v1h-3z" fill="#f0e868"/><path d="M867 168h1v17h-1zM866 178h2v7h-2z" fill="#0a78e0"/><path d="M868 173h1v12h-1zM867 173h2v6h-2zM869 168h1v6h-1zM868 168h2v6h-2z" fill="#ff0000"/><path d="M869 163h3v1h-3z" fill="#f0e868"/><path d="M871 158h1v6h-1zM870 158h2v6h-2zM873 148h1v6h-1zM872 148h2v6h-2z" fill="#ff0000"/><path d="M873 153h3v1h-3zM875 153h1v6h-1zM874 153h3v1h-3z" fill="#f0e868"/><path d="M876 148h1v6h-1zM875 148h2v6h-2z" fill="#ff0000"/><path d="M877 143h1v6h-1zM876 148h3v1h-3z" fill="#f0e868"/><path d="M878 143h1v16h-1zM877 148h2v6h-2z" fill="#0a78e0"/><path d="M879 148h1v6h-1zM878 148h2v6h-2zM880 143h1v6h-1zM879 143h2v6h-2z" fill="#ff0000"/><path d="M881 143h1v6h-1zM880 143h2v6h-2z" fill="#0a78e0"/><path d="M881 153h3v1h-3zM882 158h3v1h-3z" fill="#f0e868"/><path d="M884 158h1v11h-1zM883 158h2v6h-2z" fill="#0a78e0"/><path d="M884 168h3v1h-3z" fill="#f0e868"/><path d="M886 168h1v6h-1zM885 168h2v6h-2z" fill="#0a78e0"/><path d="M886 173h3v1h-3zM887 178h3v1h-3zM888 178h3v1h-3zM889 178h3v1h-3z" fill="#f0e868"/><path d="M891 158h1v27h-1zM890 163h2v16h-2z" fill="#ff0000"/><path d="M893 163h1v11h-1zM892 163h2v6h-2zM894 163h1v16h-1zM893 168h2v11h-2zM895 178h1v17h-1zM894 178h2v17h-2zM896 194h1v16h-1zM895 194h2v16h-2zM897 209h1v16h-1zM896 209h2v16h-2z" fill="#0a78e0"/><path d="M898 219h1v6h-1zM897 219h3v1h-3z" fill="#f0e868"/><path d="M899 199h1v21h-1zM898 204h2v16h-2zM900 194h1v11h-1zM899 199h2v6h-2z" fill="#ff0000"/><path d="M900 194h3v1h-3zM901 189h3v1h-3zM903 178h1v12h-1zM902 189h3v1h-3z" fill="#f0e868"/><path d="M904 189h1v6h-1zM903 189h2v6h-2z" fill="#0a78e0"/><path d="M904 194h3v1h-3z" fill="#f0e868"/><path d="M906 189h1v11h-1zM905 189h2v6h-2zM907 184h1v6h-1zM906 184h2v6h-2zM908 173h1v12h-1zM907 173h2v6h-2zM909 168h1v11h-1zM908 168h2v6h-2z" fill="#ff0000"/><path d="M910 168h1v11h-1zM909 173h2v6h-2z" fill="#0a78e0"/><path d="M911 178h1v7h-1zM910 178h3v1h-3z" fill="#f0e868"/><path d="M912 178h1v12h-1zM911 184h2v6h-2zM913 189h1v6h-1zM912 189h2v6h-2z" fill="#0a78e0"/><path d="M913 194h3v1h-3zM915 189h1v11h-1zM914 194h3v1h-3zM916 194h3v1h-3z" fill="#f0e868"/><path d="M918 194h1v6h-1zM917 194h2v6h-2z" fill="#0a78e0"/><path d="M919 199h1v6h-1zM918 204h3v1h-3zM923 199h1v6h-1zM922 199h3v1h-3z" fill="#f0e868"/><path d="M924 194h1v6h-1zM923 194h2v6h-2z" fill="#ff0000"/><path d="M925 194h1v11h-1zM924 199h3v1h-3zM925 199h3v1h-3z" fill="#f0e868"/><path d="M927 199h1v6h-1zM926 199h2v6h-2z" fill="#0a78e0"/><path d="M928 199h1v6h-1zM927 199h2v6h-2z" fill="#ff0000"/><path d="M930 184h1v11h-1zM929 189h3v1h-3zM930 189h3v1h-3zM931 189h3v1h-3zM932 184h3v1h-3zM933 184h3v1h-3zM935 184h1v6h-1zM934 184h3v1h-3zM935 178h3v1h-3z" fill="#f0e868"/><path d="M937 173h1v12h-1zM936 173h2v6h-2z" fill="#ff0000"/><path d="M937 178h3v1h-3z" fill="#f0e868"/><path d="M939 168h1v27h-1zM938 189h2v6h-2z" fill="#0a78e0"/><path d="M940 194h1v6h-1zM939 194h3v1h-3zM940 189h3v1h-3zM942 184h1v11h-1zM941 189h3v1h-3z" fill="#f0e868"/><path d="M943 189h1v6h-1zM942 189h2v6h-2z" fill="#0a78e0"/><path d="M945 194h1v11h-1zM944 199h3v1h-3zM946 199h1v6h-1zM945 204h3v1h-3zM946 204h3v1h-3zM948 194h3v1h-3z" fill="#f0e868"/><path d="M950 184h1v11h-1zM949 184h2v6h-2z" fill="#ff0000"/><path d="M951 184h3v1h-3zM953 178h1v7h-1zM952 184h3v1h-3z" fill="#f0e868"/><path d="M954 173h1v12h-1zM953 173h2v12h-2z" fill="#ff0000"/><path d="M954 173h3v1h-3zM955 178h3v1h-3z" fill="#f0e868"/><path d="M958 173h1v6h-1zM957 173h2v6h-2z" fill="#ff0000"/><path d="M958 173h3v1h-3z" fill="#f0e868"/><path d="M961 168h1v6h-1zM960 168h2v6h-2z" fill="#ff0000"/><path d="M961 168h3v1h-3zM962 163h3v1h-3zM963 163h3v1h-3z" fill="#f0e868"/><path d="M965 153h1v11h-1zM964 153h2v11h-2z" fill="#ff0000"/><path d="M965 158h3v1h-3zM966 153h3v1h-3z" fill="#f0e868"/><path d="M968 143h1v11h-1zM967 148h2v6h-2zM969 138h1v11h-1zM968 138h2v6h-2zM970 132h1v7h-1zM969 132h2v7h-2z" fill="#ff0000"/><path d="M971 127h1v6h-1zM970 132h3v1h-3zM971 132h3v1h-3zM973 127h1v6h-1zM972 127h3v1h-3z" fill="#f0e868"/><path d="M974 122h1v17h-1zM973 132h2v7h-2z" fill="#0a78e0"/><path d="M974 132h3v1h-3z" fill="#f0e868"/><path d="M976 127h1v12h-1zM975 127h2v6h-2z" fill="#ff0000"/><path d="M978 127h1v6h-1zM977 132h3v1h-3z" fill="#f0e868"/><path d="M979 132h1v7h-1zM978 132h2v7h-2z" fill="#0a78e0"/><path d="M982 127h1v12h-1zM981 127h2v12h-2z" fill="#ff0000"/><path d="M982 127h3v1h-3z" fill="#f0e868"/><path d="M984 117h1v11h-1zM983 122h2v6h-2z" fill="#ff0000"/><path d="M986 122h1v6h-1zM985 122h2v6h-2z" fill="#0a78e0"/><path d="M987 122h1v6h-1zM986 122h2v6h-2z" fill="#ff0000"/><path d="M987 117h3v1h-3z" fill="#f0e868"/><path d="M989 117h1v6h-1zM988 117h2v6h-2zM990 122h1v6h-1zM989 122h2v6h-2z" fill="#0a78e0"/><path d="M990 127h3v1h-3zM991 127h3v1h-3z" fill="#f0e868"/><path d="M993 127h1v6h-1zM992 127h2v6h-2z" fill="#0a78e0"/><path d="M993 132h3v1h-3z" fill="#f0e868"/><path d="M995 127h1v12h-1zM994 132h2v7h-2z" fill="#0a78e0"/><path d="M995 132h3v1h-3zM996 127h3v1h-3z" fill="#f0e868"/><path d="M998 122h1v11h-1zM997 122h2v6h-2zM999 112h1v16h-1zM998 112h2v6h-2z" fill="#ff0000"/><path d="M1002 117h3v1h-3zM1003 122h3v1h-3z" fill="#f0e868"/><path d="M1006 112h1v6h-1zM1005 112h2v6h-2z" fill="#ff0000"/><path d="M1008 117h3v1h-3zM1009 112h3v1h-3zM1012 112h3v1h-3zM1013 112h3v1h-3zM1015 122h3v1h-3z" fill="#f0e868"/><path d="M1017 117h1v6h-1zM1016 117h2v6h-2z" fill="#ff0000"/><path d="M1018 112h1v6h-1zM1017 112h3v1h-3zM1018 112h3v1h-3zM1019 107h3v1h-3zM1021 107h3v1h-3zM1023 112h1v6h-1zM1022 112h3v1h-3zM1023 107h3v1h-3zM1024 107h3v1h-3zM1026 107h3v1h-3zM1028 107h1v6h-1zM1027 107h3v1h-3z" fill="#f0e868"/><path d="M1029 102h1v6h-1zM1028 102h2v6h-2z" fill="#ff0000"/><path d="M1029 97h3v1h-3zM1033 87h1v6h-1zM1032 87h3v1h-3zM1033 92h3v1h-3zM1034 92h3v1h-3zM1035 97h3v1h-3zM1036 97h3v1h-3zM1038 97h1v6h-1zM1037 102h3v1h-3zM1038 102h3v1h-3z" fill="#f0e868"/><path d="M1040 102h1v6h-1zM1039 102h2v6h-2z" fill="#0a78e0"/><path d="M1041 107h1v6h-1zM1040 112h3v1h-3zM1041 107h3v1h-3zM1042 102h3v1h-3zM1044 107h3v1h-3zM1047 102h3v1h-3zM1048 102h3v1h-3zM1049 102h3v1h-3zM1050 97h3v1h-3zM1051 102h3v1h-3zM1052 102h3v1h-3zM1053 102h3v1h-3zM1054 102h3v1h-3zM1057 107h3v1h-3zM1059 107h1v6h-1zM1058 112h3v1h-3zM1060 102h3v1h-3zM1061 102h3v1h-3zM1063 97h1v6h-1zM1062 97h3v1h-3zM1063 92h3v1h-3zM1066 92h3v1h-3z" fill="#f0e868"/><path d="M1070 97h1v6h-1zM1069 97h2v6h-2z" fill="#0a78e0"/><path d="M1070 102h3v1h-3zM1072 102h1v6h-1zM1071 107h3v1h-3z" fill="#f0e868"/><path d="M1073 102h1v6h-1zM1072 102h2v6h-2zM1074 97h1v6h-1zM1073 97h2v6h-2z" fill="#ff0000"/><path d="M1076 92h1v6h-1zM1075 92h3v1h-3zM1076 92h3v1h-3z" fill="#f0e868"/><path d="M1078 87h1v6h-1zM1077 87h2v6h-2z" fill="#ff0000"/><path d="M1078 92h3v1h-3z" fill="#f0e868"/><path d="M1081 92h1v6h-1zM1080 92h2v6h-2zM1082 97h1v11h-1zM1081 102h2v6h-2z" fill="#0a78e0"/><path d="M1083 107h1v6h-1zM1082 107h3v1h-3zM1083 107h3v1h-3zM1084 107h3v1h-3zM1085 102h3v1h-3zM1086 102h3v1h-3zM1088 97h3v1h-3zM1091 97h3v1h-3zM1092 97h3v1h-3zM1093 97h3v1h-3zM1094 102h3v1h-3zM1096 107h3v1h-3z" fill="#f0e868"/><path d="M1098 102h1v6h-1zM1097 102h2v6h-2z" fill="#ff0000"/><path d="M1098 97h3v1h-3zM1099 92h3v1h-3zM1100 92h3v1h-3zM1102 87h3v1h-3zM1103 82h3v1h-3zM1104 82h3v1h-3z" fill="#f0e868"/><path d="M1106 82h1v6h-1zM1105 82h2v6h-2z" fill="#0a78e0"/><path d="M1106 87h3v1h-3z" fill="#f0e868"/><path d="M1108 87h1v6h-1zM1107 87h2v6h-2z" fill="#0a78e0"/><path d="M1108 92h3v1h-3zM1109 92h3v1h-3z" fill="#f0e868"/><path d="M1111 87h1v11h-1zM1110 87h2v6h-2z" fill="#ff0000"/><path d="M1113 87h3v1h-3zM1116 92h3v1h-3zM1119 97h3v1h-3zM1120 97h3v1h-3zM1121 92h3v1h-3zM1124 92h3v1h-3zM1126 102h3v1h-3zM1127 102h3v1h-3zM1128 102h3v1h-3zM1130 102h3v1h-3zM1131 102h3v1h-3zM1132 102h3v1h-3zM1135 122h3v1h-3zM1136 127h3v1h-3zM1138 127h3v1h-3zM1140 132h3v1h-3zM1144 122h1v6h-1zM1143 127h3v1h-3zM1144 127h3v1h-3zM1147 127h3v1h-3zM1148 122h3v1h-3zM1150 122h3v1h-3zM1152 117h3v1h-3zM1155 107h3v1h-3zM1157 107h3v1h-3zM1158 112h3v1h-3zM1159 112h3v1h-3zM1160 112h3v1h-3zM1161 112h3v1h-3z" fill="#f0e868"/><path d="M1163 112h1v11h-1zM1162 117h2v6h-2z" fill="#0a78e0"/><path d="M1163 122h3v1h-3z" fill="#f0e868"/><path d="M1168 107h1v6h-1zM1167 107h2v6h-2z" fill="#ff0000"/><path d="M1169 107h1v6h-1zM1168 107h2v6h-2zM1170 112h1v6h-1zM1169 112h2v6h-2z" fill="#0a78e0"/><path d="M1170 117h3v1h-3zM1171 117h3v1h-3zM1172 117h3v1h-3z" fill="#f0e868"/><path d="M1176 117h1v6h-1zM1175 117h2v6h-2z" fill="#0a78e0"/><path d="M1176 122h3v1h-3zM1177 117h3v1h-3zM1178 117h3v1h-3zM1179 117h3v1h-3zM1180 117h3v1h-3zM1182 122h3v1h-3zM1183 122h3v1h-3zM1185 132h3v1h-3zM1187 127h3v1h-3zM1189 117h3v1h-3zM1190 112h3v1h-3zM1193 107h3v1h-3zM1195 107h3v1h-3zM1197 112h3v1h-3zM1198 112h3v1h-3zM1199 112h3v1h-3zM1200 112h3v1h-3zM1202 117h3v1h-3zM1204 127h3v1h-3zM1205 127h3v1h-3zM1206 127h3v1h-3zM1207 127h3v1h-3zM1209 127h1v6h-1zM1208 132h3v1h-3zM1209 138h3v1h-3z" fill="#f0e868"/><path d="M1211 138h1v11h-1zM1210 143h2v6h-2z" fill="#0a78e0"/><path d="M1211 143h3v1h-3zM1213 138h1v6h-1zM1212 138h3v1h-3zM1214 132h3v1h-3zM1217 127h1v6h-1zM1216 127h3v1h-3zM1218 127h3v1h-3zM1219 127h3v1h-3zM1222 122h3v1h-3zM1225 117h3v1h-3z" fill="#f0e868"/><path d="M1227 117h1v11h-1zM1226 122h2v6h-2z" fill="#0a78e0"/><path d="M1227 127h3v1h-3zM1228 127h3v1h-3zM1229 127h3v1h-3zM1231 127h3v1h-3z" fill="#f0e868"/>
<path d="M8 452h2v6h-2z" fill="#0a78e0"/><path d="M14 441h1v3h-1z" fill="#ff0000"/><path d="M19 441h1v1h-1zM21 435h1v1h-1zM22 430h1v3h-1zM25 444h1v1h-1z" fill="#f0e868"/><path d="M31 432h1v3h-1z" fill="#ff0000"/><path d="M39 435h2v1h-2z" fill="#f0e868"/><path d="M44 427h2v3h-2z" fill="#ff0000"/><path d="M47 435h2v3h-2z" fill="#0a78e0"/><path d="M48 438h1v1h-1z" fill="#f0e868"/><path d="M53 432h2v3h-2z" fill="#ff0000"/><path d="M57 444h2v1h-2z" fill="#f0e868"/><path d="M66 444h1v8h-1z" fill="#ff0000"/><path d="M69 449h1v1h-1z" fill="#f0e868"/><path d="M70 435h1v3h-1z" fill="#ff0000"/><path d="M72 444h1v1h-1z" fill="#f0e868"/><path d="M73 441h1v6h-1z" fill="#0a78e0"/><path d="M80 449h2v1h-2z" fill="#f0e868"/><path d="M84 438h2v3h-2z" fill="#ff0000"/><path d="M91 432h2v6h-2zM92 424h1v8h-1z" fill="#0a78e0"/><path d="M93 424h1v1h-1zM94 421h3v1h-3zM97 421h2v1h-2zM100 424h1v1h-1zM103 421h3v1h-3z" fill="#f0e868"/><path d="M106 435h1v18h-1zM105 435h2v4h-2z" fill="#ff0000"/><path d="M107 435h1v7h-1zM106 435h2v4h-2zM108 438h1v10h-1zM109 444h1v18h-1zM108 455h2v7h-2z" fill="#0a78e0"/><path d="M110 458h1v4h-1zM109 458h2v4h-2z" fill="#ff0000"/><path d="M110 458h3v1h-3z" fill="#f0e868"/><path d="M112 452h1v7h-1zM111 455h2v4h-2z" fill="#ff0000"/><path d="M113 455h1v4h-1zM112 458h3v1h-3z" fill="#f0e868"/><path d="M114 458h1v4h-1zM113 458h2v4h-2z" fill="#0a78e0"/><path d="M114 461h3v1h-3z" fill="#f0e868"/><path d="M116 452h1v10h-1z" fill="#ff0000"/><path d="M117 452h1v7h-1zM116 452h2v4h-2z" fill="#0a78e0"/><path d="M117 455h3v1h-3zM118 455h3v1h-3z" fill="#f0e868"/><path d="M120 450h1v9h-1zM119 450h2v6h-2zM121 444h1v7h-1zM120 444h2v7h-2z" fill="#ff0000"/><path d="M121 444h3v1h-3zM123 444h1v4h-1zM122 444h3v1h-3z" fill="#f0e868"/><path d="M124 433h1v12h-1z" fill="#ff0000"/><path d="M124 438h3v1h-3z" fill="#f0e868"/><path d="M127 438h1v10h-1zM126 438h2v4h-2zM128 435h1v7h-1zM127 435h2v4h-2zM130 433h1v6h-1zM129 435h2v4h-2z" fill="#ff0000"/><path d="M131 435h1v18h-1zM130 444h2v7h-2zM132 444h1v9h-1zM131 450h2v3h-2z" fill="#0a78e0"/><path d="M133 447h1v6h-1zM132 450h2v3h-2z" fill="#ff0000"/><path d="M133 450h3v1h-3z" fill="#f0e868"/><path d="M135 450h1v3h-1zM134 450h2v3h-2z" fill="#0a78e0"/><path d="M136 447h1v6h-1zM135 447h2v4h-2z" fill="#ff0000"/><path d="M137 441h1v15h-1zM136 450h2v3h-2zM138 450h1v12h-1zM137 452h2v4h-2zM139 455h1v7h-1zM138 458h2v4h-2z" fill="#0a78e0"/><path d="M140 450h1v12h-1z" fill="#ff0000"/><path d="M141 450h1v12h-1zM140 455h2v4h-2z" fill="#0a78e0"/><path d="M141 461h3v1h-3z" fill="#f0e868"/><path d="M144 450h1v9h-1zM143 452h2v7h-2z" fill="#ff0000"/><path d="M144 452h3v1h-3z" fill="#f0e868"/><path d="M146 452h1v7h-1zM145 455h2v4h-2z" fill="#0a78e0"/><path d="M146 458h3v1h-3zM147 458h3v1h-3z" fill="#f0e868"/><path d="M149 455h1v4h-1zM148 455h2v4h-2zM150 450h1v6h-1zM149 450h2v6h-2z" fill="#ff0000"/><path d="M150 450h3v1h-3z" fill="#f0e868"/><path d="M152 450h1v9h-1z" fill="#0a78e0"/><path d="M152 458h3v1h-3zM153 461h3v1h-3z" fill="#f0e868"/><path d="M155 461h1v7h-1zM154 461h2v4h-2zM156 464h1v12h-1zM155 472h2v4h-2z" fill="#0a78e0"/><path d="M157 472h1v7h-1zM156 472h2v4h-2z" fill="#ff0000"/><path d="M157 472h3v1h-3zM158 472h3v1h-3z" fill="#f0e868"/><path d="M160 464h1v9h-1zM159 467h2v3h-2z" fill="#ff0000"/><path d="M161 467h1v3h-1zM160 467h2v3h-2z" fill="#0a78e0"/><path d="M161 467h3v1h-3zM162 467h3v1h-3z" fill="#f0e868"/><path d="M164 467h1v6h-1zM163 467h2v3h-2z" fill="#0a78e0"/><path d="M164 469h3v1h-3zM167 467h1v3h-1zM166 467h3v1h-3z" fill="#f0e868"/><path d="M168 464h1v9h-1zM167 467h2v3h-2zM169 469h1v13h-1zM168 475h2v7h-2z" fill="#0a78e0"/><path d="M169 481h3v1h-3zM171 481h1v4h-1zM170 481h3v1h-3zM171 478h3v1h-3zM172 481h3v1h-3zM173 481h3v1h-3zM174 481h3v1h-3z" fill="#f0e868"/><path d="M176 475h1v7h-1zM175 478h2v4h-2z" fill="#ff0000"/><path d="M177 478h1v4h-1zM176 478h2v4h-2z" fill="#0a78e0"/><path d="M178 478h3v1h-3zM179 478h3v1h-3zM181 478h1v4h-1zM180 478h3v1h-3z" fill="#f0e868"/><path d="M182 475h1v4h-1zM181 475h2v4h-2z" fill="#ff0000"/><path d="M182 475h3v1h-3z" fill="#f0e868"/><path d="M184 469h1v7h-1zM183 469h2v7h-2z" fill="#ff0000"/><path d="M185 467h1v6h-1zM184 469h3v1h-3z" fill="#f0e868"/><path d="M186 464h1v6h-1zM185 467h2v3h-2z" fill="#ff0000"/><path d="M188 469h1v4h-1zM187 469h3v1h-3z" fill="#f0e868"/><path d="M189 455h1v15h-1z" fill="#ff0000"/><path d="M190 452h1v16h-1zM189 464h2v4h-2z" fill="#0a78e0"/><path d="M191 458h1v10h-1zM190 458h2v4h-2z" fill="#ff0000"/><path d="M192 458h1v7h-1zM191 461h2v4h-2z" fill="#0a78e0"/><path d="M192 461h3v1h-3z" fill="#f0e868"/><path d="M194 461h1v9h-1zM193 467h2v3h-2z" fill="#0a78e0"/><path d="M194 472h3v1h-3zM196 475h3v1h-3z" fill="#f0e868"/><path d="M198 475h1v7h-1zM197 475h2v7h-2z" fill="#0a78e0"/><path d="M198 481h3v1h-3z" fill="#f0e868"/><path d="M202 467h1v6h-1zM201 467h2v3h-2z" fill="#ff0000"/><path d="M202 467h3v1h-3z" fill="#f0e868"/><path d="M205 464h1v9h-1zM204 467h2v3h-2z" fill="#0a78e0"/><path d="M206 458h1v12h-1zM205 461h2v4h-2z" fill="#ff0000"/><path d="M207 461h1v4h-1zM206 461h3v1h-3z" fill="#f0e868"/><path d="M208 461h1v9h-1zM207 467h2v3h-2zM209 467h1v15h-1z" fill="#0a78e0"/><path d="M210 475h1v7h-1zM209 475h2v4h-2zM211 469h1v10h-1zM210 469h2v7h-2zM212 464h1v6h-1zM211 464h2v4h-2z" fill="#ff0000"/><path d="M213 464h1v4h-1zM212 464h2v4h-2z" fill="#0a78e0"/><path d="M214 464h1v4h-1zM213 464h2v4h-2zM215 450h1v15h-1zM214 450h2v3h-2z" fill="#ff0000"/><path d="M215 450h3v1h-3z" fill="#f0e868"/><path d="M217 450h1v9h-1zM216 450h2v3h-2z" fill="#0a78e0"/><path d="M220 441h3v1h-3zM224 435h3v1h-3zM226 433h3v1h-3zM227 435h3v1h-3z" fill="#f0e868"/><path d="M229 435h1v7h-1zM228 438h2v4h-2z" fill="#0a78e0"/><path d="M230 438h1v4h-1zM229 438h2v4h-2z" fill="#ff0000"/><path d="M231 435h1v4h-1zM230 438h3v1h-3z" fill="#f0e868"/><path d="M232 435h1v13h-1zM231 444h2v4h-2zM233 444h1v9h-1zM232 447h2v6h-2z" fill="#0a78e0"/><path d="M233 450h3v1h-3z" fill="#f0e868"/><path d="M235 444h1v7h-1zM234 447h2v4h-2z" fill="#ff0000"/><path d="M236 447h1v4h-1zM235 450h3v1h-3zM236 450h3v1h-3zM239 452h3v1h-3z" fill="#f0e868"/><path d="M241 452h1v4h-1zM240 452h2v4h-2z" fill="#0a78e0"/><path d="M242 447h1v9h-1zM241 450h2v3h-2z" fill="#ff0000"/><path d="M243 447h1v6h-1zM242 450h3v1h-3zM243 450h3v1h-3z" fill="#f0e868"/><path d="M245 447h1v4h-1zM244 447h2v4h-2z" fill="#ff0000"/><path d="M246 447h1v6h-1zM245 450h2v3h-2z" fill="#0a78e0"/><path d="M247 450h3v1h-3z" fill="#f0e868"/><path d="M249 450h1v3h-1zM248 450h2v3h-2z" fill="#0a78e0"/><path d="M249 452h3v1h-3zM250 452h3v1h-3zM251 452h3v1h-3zM253 458h3v1h-3zM254 461h3v1h-3zM257 464h3v1h-3zM259 464h3v1h-3zM261 467h3v1h-3z" fill="#f0e868"/><path d="M264 455h1v13h-1zM263 458h2v4h-2z" fill="#ff0000"/><path d="M264 461h3v1h-3zM265 464h3v1h-3zM266 464h3v1h-3z" fill="#f0e868"/><path d="M269 452h1v10h-1zM268 452h2v4h-2z" fill="#ff0000"/><path d="M270 452h1v4h-1zM269 452h2v4h-2z" fill="#0a78e0"/><path d="M270 455h3v1h-3zM275 450h3v1h-3zM276 447h3v1h-3z" fill="#f0e868"/><path d="M279 444h1v4h-1zM278 444h2v4h-2z" fill="#ff0000"/><path d="M280 444h1v4h-1zM279 444h2v4h-2zM282 447h1v4h-1zM281 447h2v4h-2zM284 450h1v6h-1zM283 450h2v3h-2z" fill="#0a78e0"/><path d="M286 441h1v7h-1zM285 441h2v7h-2z" fill="#ff0000"/><path d="M287 441h1v7h-1zM286 441h2v7h-2zM288 447h1v6h-1zM287 447h2v6h-2z" fill="#0a78e0"/><path d="M289 447h1v6h-1zM288 450h2v3h-2z" fill="#ff0000"/><path d="M289 450h3v1h-3z" fill="#f0e868"/><path d="M291 444h1v7h-1zM290 444h2v4h-2z" fill="#ff0000"/><path d="M292 444h3v1h-3zM293 444h3v1h-3zM295 444h3v1h-3zM297 447h3v1h-3z" fill="#f0e868"/><path d="M299 441h1v10h-1zM298 444h2v4h-2zM300 438h1v7h-1zM299 438h2v7h-2z" fill="#ff0000"/><path d="M301 438h1v7h-1zM300 438h2v4h-2z" fill="#0a78e0"/><path d="M301 441h3v1h-3zM306 438h1v4h-1zM305 441h3v1h-3zM306 441h3v1h-3zM308 441h3v1h-3z" fill="#f0e868"/><path d="M310 438h1v4h-1zM309 438h2v4h-2z" fill="#ff0000"/><path d="M310 438h3v1h-3zM311 438h3v1h-3z" fill="#f0e868"/><path d="M313 430h1v12h-1zM312 433h2v3h-2z" fill="#ff0000"/><path d="M313 435h3v1h-3zM315 433h1v9h-1zM314 438h3v1h-3z" fill="#f0e868"/><path d="M317 435h1v4h-1zM316 435h2v4h-2zM318 430h1v6h-1zM317 433h2v3h-2zM319 427h1v7h-1zM318 427h2v7h-2z" fill="#ff0000"/><path d="M320 430h3v1h-3z" fill="#f0e868"/><path d="M322 427h1v7h-1zM321 430h2v4h-2z" fill="#0a78e0"/><path d="M323 433h3v1h-3zM325 435h3v1h-3zM326 433h3v1h-3zM328 427h3v1h-3zM330 427h3v1h-3z" fill="#f0e868"/><path d="M332 424h1v10h-1zM331 430h2v4h-2zM334 430h1v4h-1zM333 430h2v4h-2z" fill="#0a78e0"/><path d="M334 433h3v1h-3zM335 433h3v1h-3zM336 430h3v1h-3zM338 430h3v1h-3zM339 430h3v1h-3zM341 427h3v1h-3z" fill="#f0e868"/><path d="M343 421h1v7h-1zM342 421h2v7h-2z" fill="#ff0000"/><path d="M344 421h1v7h-1zM343 421h2v4h-2zM346 424h1v4h-1zM345 424h2v4h-2z" fill="#0a78e0"/><path d="M346 427h3v1h-3zM347 427h3v1h-3zM348 427h3v1h-3zM351 430h3v1h-3zM352 430h3v1h-3zM354 430h3v1h-3zM360 430h3v1h-3zM362 430h1v4h-1zM361 430h3v1h-3zM363 430h3v1h-3z" fill="#f0e868"/><path d="M365 424h1v7h-1zM364 427h2v4h-2z" fill="#ff0000"/><path d="M366 424h3v1h-3zM368 424h1v4h-1zM367 424h3v1h-3zM369 427h3v1h-3z" fill="#f0e868"/><path d="M371 424h1v4h-1zM370 424h2v4h-2z" fill="#ff0000"/><path d="M373 421h3v1h-3zM376 427h3v1h-3z" fill="#f0e868"/><path d="M379 424h1v7h-1zM378 424h2v7h-2z" fill="#ff0000"/><path d="M379 424h3v1h-3zM380 424h3v1h-3zM382 424h3v1h-3zM384 424h3v1h-3z" fill="#f0e868"/><path d="M387 416h1v6h-1zM386 416h2v3h-2z" fill="#ff0000"/><path d="M387 416h3v1h-3zM390 416h3v1h-3zM392 416h3v1h-3z" fill="#f0e868"/><path d="M395 413h1v4h-1zM394 413h2v4h-2z" fill="#ff0000"/><path d="M396 410h1v7h-1zM395 413h3v1h-3z" fill="#f0e868"/><path d="M397 413h1v4h-1zM396 413h2v4h-2z" fill="#0a78e0"/><path d="M398 416h1v3h-1zM397 416h3v1h-3zM399 418h3v1h-3zM401 416h3v1h-3z" fill="#f0e868"/><path d="M403 413h1v4h-1zM402 413h2v4h-2z" fill="#ff0000"/><path d="M404 413h3v1h-3z" fill="#f0e868"/><path d="M406 410h1v4h-1zM405 410h2v4h-2z" fill="#ff0000"/><path d="M408 413h3v1h-3z" fill="#f0e868"/><path d="M410 407h1v10h-1zM409 407h2v7h-2zM411 404h1v7h-1zM410 404h2v4h-2z" fill="#ff0000"/><path d="M412 404h1v4h-1zM411 404h3v1h-3z" fill="#f0e868"/><path d="M413 401h1v7h-1zM412 401h2v4h-2z" fill="#ff0000"/><path d="M415 399h1v6h-1zM414 399h2v6h-2zM416 404h1v4h-1zM415 404h2v4h-2z" fill="#0a78e0"/><path d="M417 399h1v9h-1zM416 399h2v3h-2zM418 393h1v7h-1zM417 396h2v4h-2zM420 387h1v13h-1zM419 390h2v4h-2zM421 384h1v7h-1zM420 384h2v7h-2zM422 376h1v9h-1z" fill="#ff0000"/><path d="M423 376h1v9h-1zM422 379h2v4h-2z" fill="#0a78e0"/><path d="M424 373h1v10h-1zM423 373h2v4h-2z" fill="#ff0000"/><path d="M425 370h1v4h-1zM424 373h3v1h-3z" fill="#f0e868"/><path d="M426 370h1v10h-1zM425 376h2v4h-2zM427 379h1v6h-1zM426 379h2v6h-2zM428 384h1v7h-1zM427 384h2v4h-2zM429 387h1v4h-1zM428 387h2v4h-2z" fill="#0a78e0"/><path d="M430 384h1v13h-1zM429 387h2v4h-2zM431 376h1v12h-1zM430 379h2v4h-2zM432 376h1v7h-1zM431 376h2v4h-2z" fill="#ff0000"/><path d="M433 379h3v1h-3z" fill="#f0e868"/><path d="M435 376h1v15h-1zM434 384h2v4h-2z" fill="#0a78e0"/><path d="M436 382h1v6h-1zM435 382h2v6h-2z" fill="#ff0000"/><path d="M436 382h3v1h-3z" fill="#f0e868"/><path d="M438 379h1v4h-1zM437 379h2v4h-2zM439 373h1v7h-1zM438 373h2v7h-2z" fill="#ff0000"/><path d="M440 373h1v4h-1zM439 373h2v4h-2z" fill="#0a78e0"/><path d="M441 373h1v7h-1zM440 373h2v4h-2z" fill="#ff0000"/><path d="M442 373h1v4h-1zM441 376h3v1h-3z" fill="#f0e868"/><path d="M444 367h1v10h-1zM443 367h2v10h-2z" fill="#ff0000"/><path d="M445 367h1v4h-1zM444 367h2v4h-2zM446 370h1v4h-1zM445 370h2v4h-2zM447 373h1v7h-1zM446 373h2v4h-2z" fill="#0a78e0"/><path d="M448 367h1v10h-1zM447 370h2v7h-2z" fill="#ff0000"/><path d="M449 367h1v4h-1zM448 367h3v1h-3zM449 367h3v1h-3zM450 367h3v1h-3z" fill="#f0e868"/><path d="M452 359h1v9h-1zM451 362h2v4h-2zM453 350h1v16h-1zM452 356h2v4h-2zM454 345h1v12h-1zM453 345h2v4h-2z" fill="#ff0000"/><path d="M454 342h3v1h-3z" fill="#f0e868"/><path d="M457 333h1v16h-1zM456 336h2v7h-2z" fill="#ff0000"/><path d="M457 336h3v1h-3z" fill="#f0e868"/><path d="M459 336h1v4h-1zM458 336h2v4h-2z" fill="#0a78e0"/><path d="M459 339h3v1h-3zM460 336h3v1h-3z" fill="#f0e868"/><path d="M462 328h1v9h-1z" fill="#ff0000"/><path d="M463 328h1v6h-1zM462 330h2v4h-2z" fill="#0a78e0"/><path d="M463 336h3v1h-3z" fill="#f0e868"/><path d="M465 336h1v10h-1zM464 336h2v7h-2z" fill="#0a78e0"/><path d="M465 342h3v1h-3zM466 342h3v1h-3zM467 342h3v1h-3z" fill="#f0e868"/><path d="M470 342h1v4h-1zM469 342h2v4h-2z" fill="#0a78e0"/><path d="M471 345h1v4h-1zM470 345h3v1h-3zM472 342h1v4h-1zM471 345h3v1h-3z" fill="#f0e868"/><path d="M473 345h1v6h-1zM472 348h2v3h-2z" fill="#0a78e0"/><path d="M473 350h3v1h-3z" fill="#f0e868"/><path d="M475 342h1v12h-1zM474 345h2v4h-2z" fill="#ff0000"/><path d="M476 342h1v9h-1zM475 348h2v3h-2z" fill="#0a78e0"/><path d="M476 350h3v1h-3zM477 350h3v1h-3z" fill="#f0e868"/><path d="M479 350h1v10h-1z" fill="#0a78e0"/><path d="M480 350h1v10h-1zM479 350h2v10h-2zM481 345h1v9h-1zM480 345h2v4h-2zM482 333h1v13h-1zM481 339h2v4h-2zM483 333h1v7h-1zM482 333h2v7h-2zM484 330h1v4h-1zM483 330h2v4h-2z" fill="#ff0000"/><path d="M485 330h1v13h-1zM484 336h2v7h-2z" fill="#0a78e0"/><path d="M486 333h1v10h-1zM485 333h2v10h-2z" fill="#ff0000"/><path d="M487 333h1v4h-1zM486 333h2v4h-2z" fill="#0a78e0"/><path d="M487 336h3v1h-3z" fill="#f0e868"/><path d="M489 336h1v13h-1zM488 342h2v7h-2zM490 348h1v9h-1zM489 348h2v3h-2z" fill="#0a78e0"/><path d="M491 350h1v4h-1zM490 350h3v1h-3zM492 348h1v3h-1zM491 348h3v1h-3zM492 345h3v1h-3z" fill="#f0e868"/><path d="M494 336h1v10h-1zM493 336h2v4h-2zM495 325h1v12h-1zM494 330h2v4h-2z" fill="#ff0000"/><path d="M496 328h1v9h-1zM495 333h2v4h-2z" fill="#0a78e0"/><path d="M496 333h3v1h-3zM498 328h3v1h-3z" fill="#f0e868"/><path d="M500 325h1v6h-1zM499 328h2v3h-2z" fill="#0a78e0"/><path d="M500 333h3v1h-3zM501 330h3v1h-3zM502 328h3v1h-3z" fill="#f0e868"/><path d="M505 316h1v10h-1zM504 319h2v4h-2zM506 313h1v7h-1zM505 316h2v4h-2z" fill="#ff0000"/><path d="M506 316h3v1h-3z" fill="#f0e868"/><path d="M508 313h1v7h-1zM507 313h2v4h-2z" fill="#ff0000"/><path d="M509 313h1v13h-1z" fill="#0a78e0"/><path d="M510 319h1v4h-1zM509 319h2v4h-2z" fill="#ff0000"/><path d="M511 319h1v12h-1zM510 322h2v4h-2zM512 322h1v15h-1z" fill="#0a78e0"/><path d="M513 333h1v4h-1zM512 333h2v4h-2z" fill="#ff0000"/><path d="M514 336h3v1h-3zM515 333h3v1h-3z" fill="#f0e868"/><path d="M517 333h1v10h-1z" fill="#0a78e0"/><path d="M518 339h1v4h-1zM517 342h3v1h-3z" fill="#f0e868"/><path d="M519 342h1v9h-1zM518 342h2v9h-2zM520 350h1v4h-1zM519 350h2v4h-2zM521 353h1v7h-1zM520 353h2v7h-2z" fill="#0a78e0"/><path d="M522 353h1v7h-1zM521 353h2v4h-2zM523 348h1v6h-1zM522 348h2v3h-2zM524 342h1v7h-1zM523 345h2v4h-2z" fill="#ff0000"/><path d="M524 345h3v1h-3z" fill="#f0e868"/><path d="M526 333h1v13h-1zM525 333h2v4h-2zM527 325h1v12h-1zM526 330h2v4h-2z" fill="#ff0000"/><path d="M527 333h3v1h-3z" fill="#f0e868"/><path d="M529 322h1v12h-1zM528 322h2v7h-2zM530 313h1v10h-1zM529 319h2v4h-2z" fill="#ff0000"/><path d="M531 319h3v1h-3z" fill="#f0e868"/><path d="M533 311h1v9h-1zM532 311h2v9h-2z" fill="#ff0000"/><path d="M533 311h3v1h-3z" fill="#f0e868"/><path d="M536 296h1v10h-1zM535 296h2v4h-2zM537 291h1v9h-1zM536 294h2v3h-2z" fill="#ff0000"/><path d="M537 294h3v1h-3zM539 282h3v1h-3z" fill="#f0e868"/><path d="M541 282h1v15h-1z" fill="#0a78e0"/><path d="M541 296h3v1h-3z" fill="#f0e868"/><path d="M543 296h1v10h-1zM542 299h2v4h-2z" fill="#0a78e0"/><path d="M543 302h3v1h-3z" fill="#f0e868"/><path d="M545 288h1v15h-1zM544 291h2v6h-2z" fill="#ff0000"/><path d="M546 288h1v7h-1zM545 291h2v4h-2zM547 291h1v12h-1zM546 299h2v4h-2z" fill="#0a78e0"/><path d="M547 302h3v1h-3zM548 302h3v1h-3z" fill="#f0e868"/><path d="M550 302h1v7h-1zM549 302h2v4h-2z" fill="#0a78e0"/><path d="M551 302h1v7h-1zM550 302h2v4h-2z" fill="#ff0000"/><path d="M551 302h3v1h-3z" fill="#f0e868"/><path d="M553 294h1v9h-1zM552 296h2v4h-2zM554 288h1v9h-1zM553 288h2v4h-2z" fill="#ff0000"/><path d="M555 288h1v15h-1z" fill="#0a78e0"/><path d="M556 296h1v7h-1zM555 296h2v4h-2z" fill="#ff0000"/><path d="M556 294h3v1h-3zM557 294h3v1h-3z" fill="#f0e868"/><path d="M559 291h1v6h-1zM558 291h2v4h-2z" fill="#ff0000"/><path d="M560 291h1v6h-1zM559 294h2v3h-2z" fill="#0a78e0"/><path d="M561 294h1v3h-1zM560 294h2v3h-2z" fill="#ff0000"/><path d="M563 291h1v6h-1zM562 296h3v1h-3zM564 294h1v6h-1zM563 299h3v1h-3z" fill="#f0e868"/><path d="M565 299h1v7h-1zM564 302h2v4h-2z" fill="#0a78e0"/><path d="M566 296h1v10h-1zM565 296h2v4h-2z" fill="#ff0000"/><path d="M566 296h3v1h-3z" fill="#f0e868"/><path d="M568 296h1v13h-1zM567 296h2v10h-2z" fill="#0a78e0"/><path d="M568 302h3v1h-3z" fill="#f0e868"/><path d="M570 294h1v9h-1zM569 296h2v4h-2z" fill="#ff0000"/><path d="M571 299h1v4h-1zM570 299h3v1h-3zM573 296h3v1h-3z" fill="#f0e868"/><path d="M575 277h1v23h-1z" fill="#ff0000"/><path d="M576 277h1v9h-1zM575 279h2v4h-2zM577 279h1v13h-1zM576 282h2v10h-2z" fill="#0a78e0"/><path d="M577 288h3v1h-3z" fill="#f0e868"/><path d="M579 282h1v7h-1zM578 282h2v4h-2z" fill="#ff0000"/><path d="M580 282h1v4h-1zM579 282h2v4h-2z" fill="#0a78e0"/><path d="M580 285h3v1h-3z" fill="#f0e868"/><path d="M582 279h1v7h-1zM581 282h2v4h-2z" fill="#ff0000"/><path d="M583 279h1v7h-1zM582 282h2v4h-2z" fill="#0a78e0"/><path d="M584 282h1v7h-1zM583 285h3v1h-3zM584 282h3v1h-3zM586 277h1v6h-1zM585 282h3v1h-3z" fill="#f0e868"/><path d="M587 282h1v7h-1zM586 285h2v4h-2zM588 285h1v7h-1zM587 288h2v4h-2zM589 288h1v7h-1zM588 291h2v4h-2z" fill="#0a78e0"/><path d="M589 294h3v1h-3z" fill="#f0e868"/><path d="M591 294h1v9h-1zM590 294h2v3h-2z" fill="#0a78e0"/><path d="M592 291h1v6h-1zM591 291h2v4h-2z" fill="#ff0000"/><path d="M592 291h3v1h-3z" fill="#f0e868"/><path d="M594 285h1v7h-1zM593 288h2v4h-2z" fill="#ff0000"/><path d="M595 288h1v4h-1zM594 288h2v4h-2z" fill="#0a78e0"/><path d="M595 291h3v1h-3z" fill="#f0e868"/><path d="M597 291h1v4h-1zM596 291h2v4h-2z" fill="#0a78e0"/><path d="M598 288h1v7h-1zM597 291h2v4h-2z" fill="#ff0000"/><path d="M599 288h1v4h-1zM598 288h3v1h-3zM600 288h3v1h-3z" fill="#f0e868"/><path d="M602 285h1v4h-1zM601 285h2v4h-2z" fill="#ff0000"/><path d="M602 285h3v1h-3zM603 285h3v1h-3z" fill="#f0e868"/><path d="M605 285h1v12h-1zM604 291h2v4h-2z" fill="#0a78e0"/><path d="M605 294h3v1h-3z" fill="#f0e868"/><path d="M607 288h1v7h-1zM606 288h2v4h-2z" fill="#ff0000"/><path d="M607 285h3v1h-3zM608 285h3v1h-3z" fill="#f0e868"/><path d="M610 285h1v4h-1zM609 285h2v4h-2z" fill="#0a78e0"/><path d="M611 282h1v7h-1zM610 285h2v4h-2z" fill="#ff0000"/><path d="M613 285h1v7h-1zM612 285h2v4h-2z" fill="#0a78e0"/><path d="M614 285h1v7h-1zM613 288h3v1h-3zM614 288h3v1h-3z" fill="#f0e868"/><path d="M616 282h1v7h-1zM615 285h2v4h-2z" fill="#ff0000"/><path d="M616 282h3v1h-3z" fill="#f0e868"/><path d="M618 279h1v4h-1zM617 279h2v4h-2z" fill="#ff0000"/><path d="M620 274h1v12h-1zM619 282h2v4h-2z" fill="#0a78e0"/><path d="M620 285h3v1h-3z" fill="#f0e868"/><path d="M622 285h1v4h-1zM621 285h2v4h-2z" fill="#0a78e0"/><path d="M623 282h1v4h-1zM622 285h3v1h-3zM624 282h3v1h-3zM625 282h3v1h-3z" fill="#f0e868"/><path d="M627 279h1v4h-1zM626 279h2v4h-2z" fill="#ff0000"/><path d="M628 277h1v12h-1zM627 282h2v4h-2zM629 285h1v7h-1zM628 288h2v4h-2z" fill="#0a78e0"/><path d="M630 277h1v15h-1zM629 279h2v4h-2z" fill="#ff0000"/><path d="M631 279h1v7h-1zM630 282h2v4h-2z" fill="#0a78e0"/><path d="M632 279h1v7h-1zM631 279h2v4h-2zM633 274h1v9h-1zM632 277h2v3h-2z" fill="#ff0000"/><path d="M634 277h1v3h-1zM633 277h3v1h-3zM635 279h3v1h-3z" fill="#f0e868"/><path d="M638 279h1v7h-1zM637 279h2v4h-2z" fill="#0a78e0"/><path d="M638 282h3v1h-3zM640 288h3v1h-3zM641 285h3v1h-3z" fill="#f0e868"/><path d="M643 285h1v7h-1zM642 285h2v7h-2zM645 285h1v7h-1zM644 288h2v4h-2z" fill="#0a78e0"/><path d="M645 294h3v1h-3zM646 294h3v1h-3zM647 296h3v1h-3zM648 299h3v1h-3z" fill="#f0e868"/><path d="M650 299h1v7h-1zM649 299h2v7h-2z" fill="#0a78e0"/><path d="M650 305h3v1h-3z" fill="#f0e868"/><path d="M652 305h1v9h-1zM651 305h2v9h-2z" fill="#0a78e0"/><path d="M653 308h1v6h-1zM652 308h2v4h-2zM654 299h1v10h-1zM653 302h2v4h-2z" fill="#ff0000"/><path d="M655 302h1v7h-1zM654 302h2v4h-2zM656 305h1v7h-1zM655 305h2v7h-2zM657 311h1v3h-1zM656 311h2v3h-2z" fill="#0a78e0"/><path d="M658 316h3v1h-3z" fill="#f0e868"/><path d="M661 311h1v9h-1zM660 313h2v7h-2z" fill="#0a78e0"/><path d="M662 319h3v1h-3z" fill="#f0e868"/><path d="M664 313h1v7h-1zM663 313h2v4h-2z" fill="#ff0000"/><path d="M664 313h3v1h-3z" fill="#f0e868"/><path d="M666 308h1v6h-1zM665 308h2v4h-2z" fill="#ff0000"/><path d="M667 308h1v4h-1zM666 308h2v4h-2z" fill="#0a78e0"/><path d="M667 311h3v1h-3z" fill="#f0e868"/><path d="M670 308h1v12h-1zM669 316h2v4h-2zM671 316h1v13h-1zM670 322h2v4h-2z" fill="#0a78e0"/><path d="M671 325h3v1h-3zM672 325h3v1h-3zM675 330h1v7h-1zM674 333h3v1h-3z" fill="#f0e868"/><path d="M676 325h1v12h-1zM675 325h2v4h-2zM678 316h1v4h-1zM677 316h2v4h-2zM679 311h1v6h-1zM678 311h2v6h-2z" fill="#ff0000"/><path d="M680 308h3v1h-3z" fill="#f0e868"/><path d="M682 308h1v6h-1zM681 308h2v4h-2zM683 308h1v6h-1zM682 311h2v3h-2z" fill="#0a78e0"/><path d="M683 313h3v1h-3z" fill="#f0e868"/><path d="M687 316h1v4h-1zM686 316h2v4h-2z" fill="#0a78e0"/><path d="M687 319h3v1h-3zM689 319h3v1h-3zM690 319h3v1h-3zM691 319h3v1h-3zM692 319h3v1h-3zM693 319h3v1h-3z" fill="#f0e868"/><path d="M695 319h1v7h-1zM694 322h2v4h-2z" fill="#0a78e0"/><path d="M696 319h1v7h-1zM695 319h2v4h-2z" fill="#ff0000"/><path d="M697 319h1v7h-1zM696 319h2v7h-2zM698 325h1v6h-1zM697 328h2v3h-2z" fill="#0a78e0"/><path d="M699 325h1v9h-1zM698 328h2v3h-2z" fill="#ff0000"/><path d="M700 328h3v1h-3z" fill="#f0e868"/><path d="M704 311h1v9h-1zM703 313h2v4h-2z" fill="#ff0000"/><path d="M705 319h1v4h-1zM704 319h2v4h-2z" fill="#0a78e0"/><path d="M706 313h3v1h-3zM711 313h3v1h-3zM716 299h3v1h-3zM717 296h3v1h-3zM720 299h3v1h-3zM722 299h3v1h-3zM724 305h3v1h-3zM726 308h3v1h-3zM728 308h3v1h-3z" fill="#f0e868"/><path d="M730 305h1v12h-1zM729 308h2v6h-2z" fill="#0a78e0"/><path d="M731 308h1v6h-1zM730 308h2v4h-2z" fill="#ff0000"/><path d="M735 308h1v4h-1zM734 308h2v4h-2z" fill="#0a78e0"/><path d="M735 313h3v1h-3zM737 316h3v1h-3zM738 316h3v1h-3zM739 316h3v1h-3z" fill="#f0e868"/><path d="M742 319h1v4h-1zM741 319h2v4h-2zM745 325h1v4h-1zM744 325h2v4h-2z" fill="#0a78e0"/><path d="M745 328h3v1h-3z" fill="#f0e868"/><path d="M747 325h1v4h-1zM746 325h2v4h-2z" fill="#ff0000"/><path d="M747 322h3v1h-3zM749 319h3v1h-3zM751 313h3v1h-3z" fill="#f0e868"/><path d="M753 313h1v10h-1zM752 319h2v4h-2z" fill="#0a78e0"/><path d="M754 322h3v1h-3zM759 322h3v1h-3z" fill="#f0e868"/><path d="M763 316h1v7h-1zM762 316h2v4h-2z" fill="#ff0000"/><path d="M763 313h3v1h-3z" fill="#f0e868"/><path d="M768 316h1v7h-1zM767 319h2v4h-2zM769 322h1v7h-1zM768 325h2v4h-2z" fill="#0a78e0"/><path d="M769 330h3v1h-3z" fill="#f0e868"/><path d="M771 328h1v3h-1zM770 328h2v3h-2zM772 322h1v7h-1zM771 325h2v4h-2zM775 308h1v9h-1zM774 308h2v9h-2z" fill="#ff0000"/><path d="M776 308h1v4h-1zM775 308h2v4h-2z" fill="#0a78e0"/><path d="M778 302h1v7h-1zM777 308h3v1h-3zM778 311h3v1h-3z" fill="#f0e868"/><path d="M780 311h1v12h-1zM779 316h2v7h-2z" fill="#0a78e0"/><path d="M781 313h1v10h-1zM780 313h2v4h-2zM782 305h1v12h-1zM781 305h2v4h-2zM783 299h1v7h-1zM782 299h2v7h-2zM784 294h1v9h-1zM783 294h2v6h-2zM785 288h1v7h-1zM784 291h2v4h-2z" fill="#ff0000"/><path d="M787 294h3v1h-3z" fill="#f0e868"/><path d="M789 288h1v7h-1zM788 288h2v4h-2z" fill="#ff0000"/><path d="M789 288h3v1h-3z" fill="#f0e868"/><path d="M791 285h1v12h-1zM792 294h1v15h-1zM793 305h1v9h-1zM792 308h2v4h-2zM794 308h1v9h-1zM793 313h2v4h-2zM795 316h1v7h-1zM794 316h2v4h-2zM796 316h1v13h-1zM795 325h2v4h-2zM797 328h1v3h-1zM796 328h2v3h-2z" fill="#0a78e0"/><path d="M798 330h1v4h-1zM797 330h3v1h-3z" fill="#f0e868"/><path d="M799 330h1v13h-1zM798 339h2v4h-2z" fill="#0a78e0"/><path d="M800 339h1v4h-1zM799 339h2v4h-2z" fill="#ff0000"/><path d="M801 339h1v7h-1zM800 339h2v7h-2zM802 345h1v12h-1zM801 353h2v4h-2zM803 353h1v13h-1z" fill="#0a78e0"/><path d="M803 367h3v1h-3z" fill="#f0e868"/><path d="M805 367h1v10h-1zM804 370h2v4h-2zM807 382h1v6h-1zM806 382h2v6h-2z" fill="#0a78e0"/><path d="M808 384h1v4h-1zM807 384h3v1h-3zM809 382h1v6h-1zM808 384h3v1h-3z" fill="#f0e868"/><path d="M810 384h1v16h-1zM809 393h2v4h-2zM811 396h1v6h-1zM810 396h2v4h-2z" fill="#0a78e0"/><path d="M812 384h1v16h-1zM811 390h2v4h-2zM813 376h1v15h-1zM812 379h2v4h-2z" fill="#ff0000"/><path d="M814 379h1v6h-1zM813 379h2v6h-2zM815 384h1v4h-1zM814 384h2v4h-2z" fill="#0a78e0"/><path d="M816 382h1v9h-1zM815 384h2v4h-2z" fill="#ff0000"/><path d="M817 382h1v9h-1zM816 384h2v7h-2z" fill="#0a78e0"/><path d="M818 384h1v13h-1zM817 387h2v4h-2z" fill="#ff0000"/><path d="M819 384h1v4h-1zM818 387h3v1h-3z" fill="#f0e868"/><path d="M820 387h1v10h-1zM819 390h2v4h-2z" fill="#0a78e0"/><path d="M821 393h1v4h-1zM820 393h3v1h-3z" fill="#f0e868"/><path d="M822 387h1v7h-1zM821 387h2v4h-2z" fill="#ff0000"/><path d="M822 384h3v1h-3zM823 384h3v1h-3z" fill="#f0e868"/><path d="M825 379h1v9h-1zM824 382h2v3h-2zM826 370h1v13h-1zM825 373h2v10h-2zM827 367h1v7h-1zM826 367h2v4h-2z" fill="#ff0000"/><path d="M827 367h3v1h-3z" fill="#f0e868"/><path d="M829 365h1v6h-1zM828 367h2v4h-2z" fill="#0a78e0"/><path d="M830 362h1v9h-1zM832 342h1v15h-1zM831 342h2v4h-2z" fill="#ff0000"/><path d="M832 339h3v1h-3z" fill="#f0e868"/><path d="M834 336h1v18h-1zM833 339h2v15h-2z" fill="#0a78e0"/><path d="M835 348h1v9h-1zM834 348h2v6h-2z" fill="#ff0000"/><path d="M836 348h1v3h-1zM835 350h3v1h-3z" fill="#f0e868"/><path d="M837 350h1v13h-1zM838 359h1v18h-1zM837 370h2v7h-2zM839 373h1v7h-1zM838 376h2v4h-2zM840 379h1v12h-1zM839 384h2v4h-2z" fill="#0a78e0"/><path d="M840 384h3v1h-3z" fill="#f0e868"/><path d="M842 370h1v18h-1z" fill="#ff0000"/><path d="M842 370h3v1h-3z" fill="#f0e868"/><path d="M844 365h1v6h-1zM843 367h2v4h-2z" fill="#ff0000"/><path d="M844 367h3v1h-3zM845 370h3v1h-3zM847 373h3v1h-3z" fill="#f0e868"/><path d="M849 373h1v4h-1zM848 373h2v4h-2z" fill="#0a78e0"/><path d="M849 376h3v1h-3zM850 376h3v1h-3zM852 376h1v4h-1zM851 376h3v1h-3z" fill="#f0e868"/><path d="M853 376h1v7h-1zM852 376h2v4h-2z" fill="#0a78e0"/><path d="M854 373h1v7h-1zM853 373h2v4h-2zM855 362h1v12h-1zM854 362h2v6h-2z" fill="#ff0000"/><path d="M856 359h1v24h-1z" fill="#0a78e0"/><path d="M857 376h1v7h-1zM856 376h2v4h-2zM859 373h1v4h-1zM858 373h2v4h-2z" fill="#ff0000"/><path d="M861 384h3v1h-3z" fill="#f0e868"/><path d="M863 384h1v7h-1zM862 384h2v4h-2zM864 387h1v10h-1zM863 387h2v4h-2zM865 390h1v7h-1zM864 393h2v4h-2z" fill="#0a78e0"/><path d="M866 396h3v1h-3zM867 393h3v1h-3zM868 393h3v1h-3zM869 393h3v1h-3z" fill="#f0e868"/><path d="M871 390h1v10h-1zM870 393h2v4h-2z" fill="#0a78e0"/><path d="M872 387h1v10h-1zM873 373h1v15h-1zM874 365h1v9h-1zM873 367h2v7h-2z" fill="#ff0000"/><path d="M875 367h1v13h-1zM874 367h2v10h-2z" fill="#0a78e0"/><path d="M876 370h1v7h-1zM875 370h2v7h-2z" fill="#ff0000"/><path d="M877 365h1v9h-1zM876 370h2v4h-2z" fill="#0a78e0"/><path d="M878 367h1v7h-1zM877 367h2v4h-2zM879 365h1v3h-1zM878 365h2v3h-2z" fill="#ff0000"/><path d="M879 362h3v1h-3z" fill="#f0e868"/><path d="M883 353h1v7h-1zM882 356h2v4h-2z" fill="#ff0000"/><path d="M883 356h3v1h-3zM884 356h3v1h-3z" fill="#f0e868"/><path d="M887 350h1v10h-1zM886 353h2v4h-2z" fill="#0a78e0"/><path d="M888 356h1v4h-1zM887 356h3v1h-3z" fill="#f0e868"/><path d="M889 353h1v10h-1zM888 359h2v4h-2z" fill="#0a78e0"/><path d="M890 353h1v10h-1zM889 353h2v4h-2zM891 342h1v12h-1z" fill="#ff0000"/><path d="M891 345h3v1h-3zM894 333h1v7h-1zM893 339h3v1h-3z" fill="#f0e868"/><path d="M895 339h1v10h-1zM894 342h2v4h-2zM896 345h1v9h-1zM895 350h2v4h-2z" fill="#0a78e0"/><path d="M896 353h3v1h-3zM897 356h3v1h-3zM898 353h3v1h-3z" fill="#f0e868"/><path d="M900 345h1v9h-1zM899 345h2v4h-2zM901 339h1v10h-1zM900 339h2v7h-2z" fill="#ff0000"/><path d="M902 339h1v4h-1zM901 339h2v4h-2z" fill="#0a78e0"/><path d="M902 345h3v1h-3z" fill="#f0e868"/><path d="M904 345h1v4h-1zM903 345h2v4h-2z" fill="#0a78e0"/><path d="M905 342h1v7h-1zM904 342h2v4h-2z" fill="#ff0000"/><path d="M905 342h3v1h-3z" fill="#f0e868"/><path d="M907 333h1v10h-1zM906 339h2v4h-2zM908 328h1v12h-1zM907 330h2v4h-2z" fill="#ff0000"/><path d="M908 333h3v1h-3zM909 330h3v1h-3zM911 330h1v4h-1zM910 330h3v1h-3z" fill="#f0e868"/><path d="M912 330h1v13h-1zM911 336h2v4h-2z" fill="#0a78e0"/><path d="M912 339h3v1h-3z" fill="#f0e868"/><path d="M914 333h1v13h-1zM913 336h2v4h-2zM915 328h1v12h-1zM914 328h2v9h-2zM917 322h1v4h-1zM916 322h2v4h-2z" fill="#ff0000"/><path d="M918 319h1v10h-1zM917 325h2v4h-2zM919 328h1v9h-1zM918 333h2v4h-2z" fill="#0a78e0"/><path d="M920 333h1v4h-1zM919 333h2v4h-2z" fill="#ff0000"/><path d="M921 330h1v16h-1zM920 339h2v4h-2z" fill="#0a78e0"/><path d="M921 342h3v1h-3z" fill="#f0e868"/><path d="M923 342h1v4h-1zM922 342h2v4h-2z" fill="#0a78e0"/><path d="M923 348h3v1h-3z" fill="#f0e868"/><path d="M925 348h1v3h-1zM924 348h2v3h-2z" fill="#0a78e0"/><path d="M925 353h3v1h-3z" fill="#f0e868"/><path d="M927 348h1v6h-1zM926 350h2v4h-2z" fill="#ff0000"/><path d="M928 348h1v9h-1zM927 350h2v4h-2z" fill="#0a78e0"/><path d="M928 353h3v1h-3z" fill="#f0e868"/><path d="M931 345h1v6h-1zM930 345h2v4h-2z" fill="#ff0000"/><path d="M931 342h3v1h-3zM932 342h3v1h-3z" fill="#f0e868"/><path d="M934 333h1v10h-1zM933 333h2v4h-2zM935 330h1v4h-1zM934 330h2v4h-2zM936 322h1v12h-1z" fill="#ff0000"/><path d="M936 322h3v1h-3z" fill="#f0e868"/><path d="M938 319h1v15h-1zM937 330h2v4h-2z" fill="#0a78e0"/><path d="M939 322h1v12h-1zM938 322h2v4h-2zM941 316h1v7h-1zM940 316h2v4h-2zM942 311h1v9h-1zM941 313h2v4h-2zM943 308h1v6h-1zM942 308h2v6h-2z" fill="#ff0000"/><path d="M944 308h1v6h-1zM943 308h2v4h-2zM945 311h1v6h-1zM944 313h2v4h-2z" fill="#0a78e0"/><path d="M947 313h1v7h-1zM946 316h2v4h-2z" fill="#ff0000"/><path d="M948 316h3v1h-3zM949 313h3v1h-3z" fill="#f0e868"/><path d="M951 305h1v9h-1zM950 308h2v6h-2z" fill="#ff0000"/><path d="M952 305h3v1h-3zM953 302h3v1h-3zM955 296h1v7h-1zM954 302h3v1h-3z" fill="#f0e868"/><path d="M956 288h1v15h-1z" fill="#ff0000"/><path d="M956 288h3v1h-3zM958 288h1v4h-1zM957 288h3v1h-3zM960 291h1v4h-1zM959 291h3v1h-3z" fill="#f0e868"/><path d="M961 288h1v4h-1zM960 288h2v4h-2z" fill="#ff0000"/><path d="M961 288h3v1h-3zM963 279h3v1h-3z" fill="#f0e868"/><path d="M965 274h1v6h-1zM964 274h2v4h-2zM966 268h1v7h-1zM965 271h2v4h-2z" fill="#ff0000"/><path d="M969 279h3v1h-3z" fill="#f0e868"/><path d="M971 277h1v6h-1zM970 277h2v3h-2z" fill="#ff0000"/><path d="M971 277h3v1h-3zM972 274h3v1h-3zM973 274h3v1h-3z" fill="#f0e868"/><path d="M975 274h1v15h-1zM974 285h2v4h-2z" fill="#0a78e0"/><path d="M975 288h3v1h-3z" fill="#f0e868"/><path d="M977 279h1v10h-1zM976 279h2v4h-2zM979 274h1v6h-1zM978 277h2v3h-2z" fill="#ff0000"/><path d="M980 277h1v6h-1zM979 277h2v6h-2zM981 282h1v4h-1zM980 282h2v4h-2z" fill="#0a78e0"/><path d="M982 277h1v9h-1zM981 279h2v4h-2z" fill="#ff0000"/><path d="M984 282h1v10h-1zM983 285h2v4h-2zM986 291h1v6h-1zM985 291h2v6h-2zM987 296h1v7h-1zM986 296h2v7h-2z" fill="#0a78e0"/><path d="M988 305h1v4h-1zM987 305h3v1h-3zM988 305h3v1h-3z" fill="#f0e868"/><path d="M992 294h1v6h-1zM991 296h2v4h-2z" fill="#ff0000"/><path d="M993 302h3v1h-3z" fill="#f0e868"/><path d="M996 302h1v7h-1zM995 302h2v7h-2zM997 294h1v12h-1zM996 299h2v4h-2z" fill="#ff0000"/><path d="M998 288h3v1h-3z" fill="#f0e868"/><path d="M1000 288h1v9h-1zM999 291h2v4h-2z" fill="#0a78e0"/><path d="M1000 296h3v1h-3z" fill="#f0e868"/><path d="M1003 291h1v6h-1zM1002 291h2v4h-2z" fill="#ff0000"/><path d="M1004 291h3v1h-3zM1005 291h3v1h-3zM1006 291h3v1h-3zM1008 294h3v1h-3zM1009 296h3v1h-3z" fill="#f0e868"/><path d="M1011 296h1v4h-1zM1010 296h2v4h-2z" fill="#0a78e0"/><path d="M1011 299h3v1h-3z" fill="#f0e868"/><path d="M1015 299h1v7h-1zM1014 302h2v4h-2z" fill="#0a78e0"/><path d="M1015 305h3v1h-3zM1018 305h1v7h-1zM1017 308h3v1h-3zM1019 311h3v1h-3z" fill="#f0e868"/><path d="M1022 313h1v10h-1zM1021 313h2v7h-2z" fill="#0a78e0"/><path d="M1024 316h1v4h-1zM1023 316h3v1h-3z" fill="#f0e868"/><path d="M1025 313h1v4h-1zM1024 313h2v4h-2z" fill="#ff0000"/><path d="M1025 313h3v1h-3z" fill="#f0e868"/><path d="M1027 305h1v9h-1zM1026 308h2v4h-2zM1028 299h1v10h-1zM1027 302h2v4h-2zM1031 288h1v7h-1zM1030 288h2v4h-2z" fill="#ff0000"/><path d="M1031 285h3v1h-3zM1032 285h3v1h-3zM1033 285h3v1h-3zM1034 288h3v1h-3z" fill="#f0e868"/><path d="M1036 288h1v7h-1zM1035 291h2v4h-2z" fill="#0a78e0"/><path d="M1036 294h3v1h-3zM1037 291h3v1h-3zM1038 291h3v1h-3zM1039 291h3v1h-3zM1040 291h3v1h-3z" fill="#f0e868"/><path d="M1044 279h1v13h-1zM1043 288h2v4h-2z" fill="#0a78e0"/><path d="M1045 294h1v3h-1zM1044 294h3v1h-3z" fill="#f0e868"/><path d="M1046 291h1v6h-1zM1045 291h2v4h-2z" fill="#ff0000"/><path d="M1046 291h3v1h-3z" fill="#f0e868"/><path d="M1048 285h1v7h-1zM1047 285h2v7h-2z" fill="#ff0000"/><path d="M1050 282h1v4h-1zM1049 285h3v1h-3z" fill="#f0e868"/><path d="M1051 282h1v7h-1zM1050 282h2v4h-2zM1052 279h1v4h-1zM1051 279h2v4h-2zM1054 271h1v9h-1zM1053 274h2v6h-2z" fill="#ff0000"/><path d="M1055 274h1v6h-1zM1054 277h2v3h-2z" fill="#0a78e0"/><path d="M1056 277h3v1h-3z" fill="#f0e868"/><path d="M1058 277h1v12h-1zM1057 282h2v7h-2zM1059 288h1v7h-1zM1058 291h2v4h-2z" fill="#0a78e0"/><path d="M1059 296h3v1h-3zM1060 294h3v1h-3zM1063 291h3v1h-3zM1064 294h3v1h-3zM1067 291h1v4h-1zM1066 294h3v1h-3z" fill="#f0e868"/><path d="M1068 294h1v12h-1zM1067 299h2v4h-2zM1069 302h1v15h-1zM1068 311h2v6h-2zM1070 313h1v10h-1zM1069 319h2v4h-2z" fill="#0a78e0"/><path d="M1071 316h1v7h-1zM1070 319h2v4h-2z" fill="#ff0000"/><path d="M1072 319h1v10h-1zM1071 322h2v4h-2z" fill="#0a78e0"/><path d="M1073 316h1v10h-1zM1072 319h2v7h-2z" fill="#ff0000"/><path d="M1074 322h3v1h-3zM1076 322h3v1h-3z" fill="#f0e868"/><path d="M1078 313h1v13h-1zM1077 316h2v4h-2z" fill="#ff0000"/><path d="M1078 319h3v1h-3zM1079 322h3v1h-3zM1083 325h1v4h-1zM1082 328h3v1h-3zM1084 328h3v1h-3z" fill="#f0e868"/><path d="M1086 325h1v9h-1zM1085 328h2v6h-2z" fill="#0a78e0"/><path d="M1086 333h3v1h-3zM1087 330h3v1h-3z" fill="#f0e868"/><path d="M1090 328h1v6h-1zM1089 328h2v3h-2zM1091 322h1v7h-1zM1090 325h2v4h-2z" fill="#ff0000"/><path d="M1092 319h1v4h-1zM1091 322h3v1h-3zM1093 319h3v1h-3z" fill="#f0e868"/><path d="M1101 280h2v5h-2z" fill="#ff0000"/><path d="M1101 290h2v1h-2zM1105 306h2v1h-2z" fill="#f0e868"/><path d="M1106 314h2v5h-2z" fill="#0a78e0"/><path d="M1107 327h1v1h-1z" fill="#f0e868"/><path d="M1108 328h1v12h-1z" fill="#0a78e0"/><path d="M1109 339h1v2h-1z" fill="#ff0000"/><path d="M1110 330h1v1h-1zM1112 310h1v1h-1z" fill="#f0e868"/><path d="M1113 294h1v5h-1z" fill="#ff0000"/><path d="M1116 319h1v1h-1zM1117 316h1v1h-1zM1118 322h1v1h-1zM1121 334h1v1h-1z" fill="#f0e868"/><path d="M1122 322h1v2h-1z" fill="#ff0000"/><path d="M1124 320h1v6h-1zM1126 324h1v3h-1z" fill="#0a78e0"/><path d="M1129 334h2v1h-2zM1134 344h2v1h-2zM1135 346h1v2h-1z" fill="#f0e868"/><path d="M1137 348h2v5h-2z" fill="#0a78e0"/><path d="M1138 353h1v1h-1zM1145 348h1v1h-1zM1148 344h3v1h-3zM1152 339h1v1h-1z" fill="#f0e868"/><path d="M1155 334h1v2h-1z" fill="#ff0000"/><path d="M1156 328h1v3h-1zM1157 330h1v1h-1z" fill="#f0e868"/><path d="M1162 322h1v2h-1z" fill="#ff0000"/><path d="M1176 319h1v1h-1z" fill="#f0e868"/><path d="M1178 319h2v3h-2zM1203 324h1v3h-1z" fill="#ff0000"/><path d="M1204 330h1v1h-1zM1206 333h2v1h-2zM1221 319h2v1h-2zM1227 324h2v1h-2zM1231 305h2v1h-2z" fill="#f0e868"/>
<path d="M8.2 542.7 L9.2 541.4 L10.2 542.7 L11.2 540.0 L12.2 541.4 L13.2 541.8 L14.2 547.6 L15.2 550.4 L16.2 554.0 L17.2 553.5 L18.2 553.1 L19.2 554.0 L20.2 552.6 L21.2 549.0 L22.2 549.0 L23.2 547.6 L24.2 549.0 L25.2 544.1 L26.2 541.8 L27.2 542.7 L28.2 542.2 L29.2 544.1 L30.2 541.4 L31.2 545.4 L32.2 548.6 L33.2 550.8 L34.2 551.7 L35.2 552.6 L36.2 549.9 L37.2 548.1 L38.2 548.1 L39.2 546.8 L40.2 545.4 L41.2 546.3 L42.2 547.6 L43.2 547.6 L44.2 550.4 L45.2 551.2 L46.2 551.2 L47.2 550.8 L48.2 546.8 L49.2 543.1 L50.2 543.6 L51.2 543.1 L52.2 542.2 L53.2 543.1 L54.2 545.0 L55.2 546.8 L56.2 545.4 L57.2 540.9 L58.2 541.4 L59.2 543.1 L60.2 542.2 L61.2 542.7 L62.2 540.5 L63.2 539.6 L64.2 540.0 L65.2 541.8 L66.2 540.9 L67.2 540.9 L68.2 539.1 L69.2 537.3 L70.2 538.2 L71.2 541.4 L72.2 537.3 L73.2 535.5 L74.2 535.1 L75.2 535.1 L76.2 537.3 L77.2 537.3 L78.2 534.1 L79.2 533.2 L80.2 533.7 L81.2 535.1 L82.2 533.2 L83.2 534.6 L84.2 539.6 L85.2 541.8 L86.2 538.2 L87.2 537.3 L88.2 537.3 L89.2 536.0 L90.2 538.2 L91.2 536.9 L92.2 536.9 L93.2 539.6 L94.2 545.0 L95.2 545.4 L96.2 547.2 L97.2 545.9 L98.2 544.5 L99.2 544.1 L100.2 544.5 L101.2 545.4 L102.2 547.6 L103.2 547.2 L104.2 547.6 L105.2 548.6 L106.2 542.2 L107.2 536.4 L108.2 533.7 L109.2 533.2 L110.2 531.0 L111.2 532.4 L112.2 532.4 L113.2 533.2 L114.2 532.8 L115.2 532.4 L116.2 531.5 L117.2 531.0 L118.2 530.1 L119.2 531.5 L120.2 533.2 L121.2 536.0 L122.2 540.5 L123.2 537.8 L124.2 537.8 L125.2 539.6 L126.2 539.6 L127.2 540.0 L128.2 540.9 L129.2 541.4 L130.2 542.2 L131.2 540.9 L132.2 539.1 L133.2 540.9 L134.2 539.6 L135.2 538.2 L136.2 539.1 L137.2 541.4 L138.2 540.5 L139.2 540.9 L140.2 539.1 L141.2 536.0 L142.2 536.9 L143.2 537.3 L144.2 540.0 L145.2 541.8 L146.2 540.0 L147.2 540.0 L148.2 542.2 L149.2 541.4 L150.2 542.2 L151.2 542.7 L152.2 544.1 L153.2 544.1 L154.2 546.3 L155.2 543.1 L156.2 542.7 L157.2 541.4 L158.2 539.1 L159.2 536.0 L160.2 535.5 L161.2 536.9 L162.2 539.1 L163.2 542.2 L164.2 542.2 L165.2 543.6 L166.2 546.8 L167.2 547.6 L168.2 548.6 L169.2 549.5 L170.2 546.8 L171.2 542.7 L172.2 540.9 L173.2 538.6 L174.2 538.2 L175.2 536.9 L176.2 536.9 L177.2 534.6 L178.2 533.2 L179.2 534.6 L180.2 535.5 L181.2 537.3 L182.2 538.6 L183.2 540.0 L184.2 539.1 L185.2 540.9 L186.2 541.8 L187.2 541.8 L188.2 543.6 L189.2 543.6 L190.2 544.1 L191.2 542.7 L192.2 542.2 L193.2 540.9 L194.2 540.5 L195.2 537.8 L196.2 534.6 L197.2 533.7 L198.2 531.0 L199.2 527.9 L200.2 527.4 L201.2 529.2 L202.2 531.0 L203.2 531.9 L204.2 533.7 L205.2 534.6 L206.2 535.5 L207.2 534.1 L208.2 529.6 L209.2 525.6 L210.2 526.1 L211.2 527.0 L212.2 531.0 L213.2 534.1 L214.2 534.6 L215.2 536.4 L216.2 537.3 L217.2 539.1 L218.2 536.9 L219.2 539.6 L220.2 538.2 L221.2 536.4 L222.2 537.3 L223.2 540.5 L224.2 540.9 L225.2 543.6 L226.2 544.1 L227.2 547.6 L228.2 547.2 L229.2 543.1 L230.2 542.7 L231.2 541.4 L232.2 539.1 L233.2 535.5 L234.2 533.7 L235.2 532.4 L236.2 531.9 L237.2 530.6 L238.2 531.5 L239.2 532.8 L240.2 531.5 L241.2 533.2 L242.2 532.4 L243.2 531.0 L244.2 530.6 L245.2 530.1 L246.2 530.1 L247.2 530.1 L248.2 530.1 L249.2 531.0 L250.2 530.6 L251.2 531.0 L252.2 529.6 L253.2 530.6 L254.2 531.0 L255.2 531.5 L256.2 532.4 L257.2 532.4 L258.2 531.9 L259.2 532.4 L260.2 531.0 L261.2 530.1 L262.2 532.4 L263.2 534.1 L264.2 535.1 L265.2 534.1 L266.2 535.1 L267.2 534.6 L268.2 537.8 L269.2 536.9 L270.2 536.0 L271.2 536.4 L272.2 536.0 L273.2 536.9 L274.2 540.5 L275.2 540.0 L276.2 542.2 L277.2 546.3 L278.2 548.6 L279.2 547.6 L280.2 549.0 L281.2 550.4 L282.2 550.4 L283.2 550.4 L284.2 549.9 L285.2 550.8 L286.2 552.1 L287.2 549.0 L288.2 549.0 L289.2 551.2 L290.2 550.4 L291.2 550.4 L292.2 551.2 L293.2 553.5 L294.2 553.5 L295.2 552.6 L296.2 552.6 L297.2 552.6 L298.2 554.0 L299.2 552.6 L300.2 554.0 L301.2 553.5 L302.2 556.6 L303.2 558.9 L304.2 559.8 L305.2 559.8 L306.2 562.1 L307.2 564.3 L308.2 563.9 L309.2 565.2 L310.2 565.6 L311.2 563.0 L312.2 562.1 L313.2 564.3 L314.2 565.6 L315.2 567.5 L316.2 568.4 L317.2 570.6 L318.2 569.2 L319.2 567.9 L320.2 569.7 L321.2 570.6 L322.2 568.8 L323.2 568.8 L324.2 567.5 L325.2 568.4 L326.2 568.4 L327.2 567.9 L328.2 569.7 L329.2 570.1 L330.2 571.5 L331.2 569.7 L332.2 567.0 L333.2 568.4 L334.2 567.5 L335.2 570.1 L336.2 571.1 L337.2 570.6 L338.2 568.4 L339.2 571.5 L340.2 572.0 L341.2 572.0 L342.2 571.5 L343.2 572.0 L344.2 572.9 L345.2 572.0 L346.2 572.0 L347.2 572.9 L348.2 572.9 L349.2 570.1 L350.2 569.2 L351.2 568.8 L352.2 567.0 L353.2 569.2 L354.2 569.2 L355.2 569.7 L356.2 567.5 L357.2 568.4 L358.2 566.6 L359.2 564.8 L360.2 564.8 L361.2 563.0 L362.2 563.0 L363.2 563.0 L364.2 559.8 L365.2 560.2 L366.2 559.4 L367.2 560.2 L368.2 561.6 L369.2 560.7 L370.2 561.6 L371.2 560.7 L372.2 562.5 L373.2 562.5 L374.2 565.6 L375.2 562.5 L376.2 563.4 L377.2 563.4 L378.2 563.9 L379.2 564.3 L380.2 563.4 L381.2 564.8 L382.2 563.4 L383.2 564.8 L384.2 566.6 L385.2 566.6 L386.2 569.2 L387.2 571.5 L388.2 572.4 L389.2 572.0 L390.2 571.5 L391.2 570.6 L392.2 570.6 L393.2 567.9 L394.2 567.5 L395.2 567.0 L396.2 566.1 L397.2 568.4 L398.2 567.9 L399.2 566.1 L400.2 564.8 L401.2 565.2 L402.2 565.6 L403.2 564.3 L404.2 567.0 L405.2 566.6 L406.2 570.6 L407.2 572.9 L408.2 571.5 L409.2 570.1 L410.2 571.5 L411.2 574.6 L412.2 576.5 L413.2 575.6 L414.2 574.6 L415.2 575.1 L416.2 573.8 L417.2 572.9 L418.2 574.6 L419.2 574.2 L420.2 573.8 L421.2 575.6 L422.2 579.1 L423.2 581.4 L424.2 585.5 L425.2 589.1 L426.2 592.2 L427.2 588.6 L428.2 585.0 L429.2 584.6 L430.2 584.1 L431.2 589.1 L432.2 590.4 L433.2 592.6 L434.2 593.6 L435.2 595.4 L436.2 593.1 L437.2 594.0 L438.2 594.0 L439.2 595.4 L440.2 597.1 L441.2 598.1 L442.2 595.4 L443.2 595.4 L444.2 593.6 L445.2 592.2 L446.2 593.1 L447.2 594.0 L448.2 592.6 L449.2 591.3 L450.2 589.5 L451.2 592.6 L452.2 594.5 L453.2 598.1 L454.2 601.6 L455.2 604.4 L456.2 608.4 L457.2 612.0 L458.2 611.6 L459.2 612.0 L460.2 613.8 L461.2 610.6 L462.2 612.0 L463.2 608.9 L464.2 608.4 L465.2 606.1 L466.2 603.0 L467.2 600.8 L468.2 602.1 L469.2 604.8 L470.2 603.9 L471.2 603.5 L472.2 600.8 L473.2 601.6 L474.2 601.6 L475.2 599.9 L476.2 601.2 L477.2 598.5 L478.2 600.3 L479.2 603.9 L480.2 604.8 L481.2 605.7 L482.2 606.6 L483.2 608.0 L484.2 609.8 L485.2 607.5 L486.2 604.8 L487.2 603.9 L488.2 602.6 L489.2 595.8 L490.2 589.1 L491.2 589.5 L492.2 587.7 L493.2 585.9 L494.2 591.8 L495.2 594.0 L496.2 599.9 L497.2 596.2 L498.2 594.5 L499.2 596.2 L500.2 598.1 L501.2 599.4 L502.2 599.9 L503.2 598.1 L504.2 597.6 L505.2 601.2 L506.2 603.5 L507.2 602.6 L508.2 600.3 L509.2 602.1 L510.2 600.3 L511.2 597.6 L512.2 596.2 L513.2 595.4 L514.2 596.7 L515.2 598.5 L516.2 599.0 L517.2 599.9 L518.2 597.6 L519.2 594.5 L520.2 596.2 L521.2 592.6 L522.2 595.4 L523.2 596.7 L524.2 598.1 L525.2 600.8 L526.2 603.5 L527.2 604.4 L528.2 606.1 L529.2 609.8 L530.2 612.0 L531.2 614.7 L532.2 611.6 L533.2 610.2 L534.2 612.0 L535.2 614.2 L536.2 620.6 L537.2 621.9 L538.2 626.4 L539.2 629.1 L540.2 628.6 L541.2 630.0 L542.2 626.4 L543.2 625.1 L544.2 621.9 L545.2 621.9 L546.2 623.7 L547.2 625.5 L548.2 623.2 L549.2 621.9 L550.2 623.2 L551.2 622.8 L552.2 626.0 L553.2 629.1 L554.2 631.4 L555.2 627.8 L556.2 625.5 L557.2 627.8 L558.2 630.9 L559.2 628.6 L560.2 628.6 L561.2 627.8 L562.2 630.5 L563.2 628.6 L564.2 626.0 L565.2 622.4 L566.2 621.0 L567.2 621.5 L568.2 620.6 L569.2 620.6 L570.2 617.9 L571.2 614.2 L572.2 613.8 L573.2 612.5 L574.2 618.3 L575.2 621.9 L576.2 622.8 L577.2 621.5 L578.2 623.7 L579.2 623.7 L580.2 625.5 L581.2 625.5 L582.2 626.4 L583.2 625.5 L584.2 627.8 L585.2 628.2 L586.2 626.4 L587.2 627.3 L588.2 626.9 L589.2 622.8 L590.2 617.9 L591.2 620.6 L592.2 620.6 L593.2 621.0 L594.2 623.2 L595.2 623.7 L596.2 625.1 L597.2 624.1 L598.2 623.7 L599.2 621.5 L600.2 621.0 L601.2 621.9 L602.2 622.4 L603.2 620.1 L604.2 622.4 L605.2 621.5 L606.2 620.6 L607.2 620.1 L608.2 622.4 L609.2 624.1 L610.2 624.1 L611.2 625.5 L612.2 628.2 L613.2 626.4 L614.2 626.0 L615.2 623.7 L616.2 625.5 L617.2 626.0 L618.2 626.4 L619.2 626.4 L620.2 626.9 L621.2 624.6 L622.2 622.4 L623.2 622.4 L624.2 623.2 L625.2 624.6 L626.2 625.5 L627.2 624.6 L628.2 621.5 L629.2 620.1 L630.2 619.6 L631.2 620.6 L632.2 622.4 L633.2 623.7 L634.2 622.4 L635.2 625.1 L636.2 626.0 L637.2 628.2 L638.2 627.8 L639.2 626.4 L640.2 626.4 L641.2 625.1 L642.2 623.2 L643.2 622.8 L644.2 623.2 L645.2 621.5 L646.2 625.5 L647.2 627.3 L648.2 626.9 L649.2 624.6 L650.2 623.2 L651.2 621.0 L652.2 622.8 L653.2 622.8 L654.2 623.7 L655.2 623.7 L656.2 623.7 L657.2 621.5 L658.2 621.5 L659.2 620.1 L660.2 622.8 L661.2 621.5 L662.2 622.4 L663.2 623.7 L664.2 626.9 L665.2 630.0 L666.2 636.8 L667.2 639.0 L668.2 637.6 L669.2 636.3 L670.2 635.9 L671.2 634.5 L672.2 632.7 L673.2 630.5 L674.2 630.5 L675.2 626.4 L676.2 625.1 L677.2 623.7 L678.2 622.8 L679.2 619.6 L680.2 624.6 L681.2 630.9 L682.2 630.5 L683.2 628.2 L684.2 626.0 L685.2 625.1 L686.2 625.5 L687.2 623.2 L688.2 621.5 L689.2 621.9 L690.2 625.1 L691.2 624.1 L692.2 624.1 L693.2 624.1 L694.2 625.5 L695.2 626.4 L696.2 625.5 L697.2 626.4 L698.2 625.5 L699.2 625.5 L700.2 625.5 L701.2 622.8 L702.2 625.1 L703.2 627.8 L704.2 630.5 L705.2 631.8 L706.2 634.1 L707.2 637.2 L708.2 641.7 L709.2 644.0 L710.2 645.3 L711.2 643.5 L712.2 638.1 L713.2 634.1 L714.2 632.7 L715.2 635.9 L716.2 640.8 L717.2 641.2 L718.2 642.6 L719.2 641.7 L720.2 642.6 L721.2 639.9 L722.2 636.8 L723.2 634.1 L724.2 633.1 L725.2 632.2 L726.2 629.6 L727.2 626.0 L728.2 624.6 L729.2 624.6 L730.2 627.3 L731.2 627.8 L732.2 626.0 L733.2 626.4 L734.2 626.0 L735.2 629.6 L736.2 630.9 L737.2 630.5 L738.2 630.9 L739.2 628.6 L740.2 625.5 L741.2 625.5 L742.2 623.7 L743.2 624.1 L744.2 626.9 L745.2 626.9 L746.2 626.4 L747.2 626.0 L748.2 625.1 L749.2 625.1 L750.2 622.8 L751.2 621.9 L752.2 621.5 L753.2 620.1 L754.2 622.4 L755.2 620.6 L756.2 621.0 L757.2 622.4 L758.2 621.9 L759.2 619.6 L760.2 620.6 L761.2 620.6 L762.2 617.0 L763.2 617.0 L764.2 615.1 L765.2 615.6 L766.2 618.8 L767.2 619.2 L768.2 618.3 L769.2 617.4 L770.2 618.3 L771.2 620.1 L772.2 620.6 L773.2 621.0 L774.2 623.2 L775.2 626.0 L776.2 628.6 L777.2 629.1 L778.2 629.1 L779.2 624.1 L780.2 615.6 L781.2 615.1 L782.2 617.0 L783.2 619.6 L784.2 622.4 L785.2 624.6 L786.2 624.1 L787.2 622.8 L788.2 621.5 L789.2 624.1 L790.2 627.8 L791.2 629.1 L792.2 630.5 L793.2 617.9 L794.2 612.9 L795.2 612.0 L796.2 611.1 L797.2 608.9 L798.2 606.1 L799.2 605.2 L800.2 602.1 L801.2 599.0 L802.2 598.1 L803.2 593.1 L804.2 589.5 L805.2 587.7 L806.2 584.1 L807.2 581.9 L808.2 580.1 L809.2 580.1 L810.2 576.9 L811.2 579.6 L812.2 578.7 L813.2 581.9 L814.2 582.8 L815.2 590.4 L816.2 586.4 L817.2 585.9 L818.2 582.3 L819.2 581.4 L820.2 582.3 L821.2 581.4 L822.2 580.1 L823.2 581.0 L824.2 580.5 L825.2 579.6 L826.2 581.9 L827.2 582.8 L828.2 588.6 L829.2 593.1 L830.2 594.5 L831.2 596.7 L832.2 599.9 L833.2 604.8 L834.2 603.5 L835.2 602.6 L836.2 600.3 L837.2 600.8 L838.2 597.6 L839.2 593.1 L840.2 589.1 L841.2 588.6 L842.2 590.4 L843.2 593.1 L844.2 597.1 L845.2 597.6 L846.2 596.7 L847.2 596.7 L848.2 593.6 L849.2 590.9 L850.2 588.1 L851.2 588.1 L852.2 590.4 L853.2 589.5 L854.2 588.1 L855.2 589.1 L856.2 588.1 L857.2 585.5 L858.2 584.6 L859.2 586.4 L860.2 585.5 L861.2 585.5 L862.2 587.2 L863.2 585.5 L864.2 585.5 L865.2 588.1 L866.2 586.8 L867.2 585.5 L868.2 585.0 L869.2 583.6 L870.2 584.1 L871.2 581.9 L872.2 582.3 L873.2 581.9 L874.2 585.0 L875.2 596.2 L876.2 596.2 L877.2 595.4 L878.2 598.5 L879.2 600.3 L880.2 599.9 L881.2 599.9 L882.2 602.1 L883.2 605.2 L884.2 608.0 L885.2 610.2 L886.2 612.9 L887.2 613.8 L888.2 613.4 L889.2 612.9 L890.2 617.0 L891.2 618.3 L892.2 620.1 L893.2 622.4 L894.2 625.5 L895.2 630.9 L896.2 631.4 L897.2 628.2 L898.2 628.6 L899.2 627.8 L900.2 630.0 L901.2 629.1 L902.2 629.1 L903.2 629.1 L904.2 627.8 L905.2 629.1 L906.2 626.0 L907.2 626.0 L908.2 626.0 L909.2 628.6 L910.2 628.2 L911.2 631.4 L912.2 631.4 L913.2 629.1 L914.2 630.0 L915.2 635.0 L916.2 640.8 L917.2 641.2 L918.2 643.1 L919.2 637.6 L920.2 633.1 L921.2 633.6 L922.2 632.2 L923.2 632.7 L924.2 630.5 L925.2 627.8 L926.2 626.4 L927.2 626.4 L928.2 624.6 L929.2 622.4 L930.2 623.2 L931.2 624.6 L932.2 625.5 L933.2 626.0 L934.2 628.6 L935.2 630.5 L936.2 632.2 L937.2 636.3 L938.2 637.6 L939.2 641.7 L940.2 644.0 L941.2 645.3 L942.2 645.8 L943.2 647.6 L944.2 647.6 L945.2 648.5 L946.2 646.2 L947.2 647.6 L948.2 647.6 L949.2 645.3 L950.2 646.2 L951.2 642.6 L952.2 648.0 L953.2 648.9 L954.2 648.5 L955.2 650.2 L956.2 656.1 L957.2 656.1 L958.2 657.5 L959.2 656.6 L960.2 657.0 L961.2 657.5 L962.2 654.8 L963.2 656.1 L964.2 657.5 L965.2 658.8 L966.2 659.7 L967.2 657.9 L968.2 658.8 L969.2 653.9 L970.2 651.1 L971.2 649.4 L972.2 648.5 L973.2 649.8 L974.2 652.5 L975.2 647.1 L976.2 645.3 L977.2 644.4 L978.2 645.8 L979.2 648.5 L980.2 649.4 L981.2 651.1 L982.2 648.0 L983.2 644.9 L984.2 640.8 L985.2 638.1 L986.2 636.8 L987.2 635.0 L988.2 630.0 L989.2 630.0 L990.2 628.6 L991.2 631.4 L992.2 635.4 L993.2 634.1 L994.2 632.2 L995.2 631.4 L996.2 630.0 L997.2 629.1 L998.2 630.5 L999.2 630.5 L1000.2 629.1 L1001.2 630.9 L1002.2 631.8 L1003.2 632.7 L1004.2 636.3 L1005.2 636.8 L1006.2 634.1 L1007.2 635.0 L1008.2 632.2 L1009.2 632.2 L1010.2 632.2 L1011.2 632.7 L1012.2 630.9 L1013.2 631.4 L1014.2 629.1 L1015.2 629.1 L1016.2 626.4 L1017.2 626.9 L1018.2 623.2 L1019.2 622.8 L1020.2 620.6 L1021.2 617.4 L1022.2 617.0 L1023.2 616.5 L1024.2 617.0 L1025.2 617.0 L1026.2 618.3 L1027.2 621.0 L1028.2 620.1 L1029.2 623.2 L1030.2 625.5 L1031.2 626.0 L1032.2 628.2 L1033.2 628.2 L1034.2 628.6 L1035.2 629.1 L1036.2 628.6 L1037.2 629.1 L1038.2 630.9 L1039.2 631.8 L1040.2 631.4 L1041.2 631.8 L1042.2 632.2 L1043.2 635.4 L1044.2 635.4 L1045.2 632.7 L1046.2 632.2 L1047.2 631.4 L1048.2 629.6 L1049.2 630.9 L1050.2 630.5 L1051.2 628.2 L1052.2 629.6 L1053.2 634.1 L1054.2 638.1 L1055.2 639.0 L1056.2 639.0 L1057.2 635.9 L1058.2 635.0 L1059.2 635.9 L1060.2 638.1 L1061.2 631.4 L1062.2 626.9 L1063.2 627.8 L1064.2 626.0 L1065.2 625.1 L1066.2 626.4 L1067.2 624.1 L1068.2 618.3 L1069.2 612.9 L1070.2 611.1 L1071.2 611.1 L1072.2 609.8 L1073.2 611.1 L1074.2 609.8 L1075.2 608.4 L1076.2 607.5 L1077.2 605.2 L1078.2 605.7 L1079.2 605.2 L1080.2 607.1 L1081.2 610.2 L1082.2 610.2 L1083.2 611.6 L1084.2 610.2 L1085.2 612.5 L1086.2 615.1 L1087.2 610.2 L1088.2 606.6 L1089.2 603.9 L1090.2 603.5 L1091.2 602.6 L1092.2 602.6 L1093.2 605.7 L1094.2 607.1 L1095.2 610.6 L1096.2 610.6 L1097.2 611.1 L1098.2 612.0 L1099.2 611.6 L1100.2 608.9 L1101.2 615.1 L1102.2 622.8 L1103.2 626.9 L1104.2 629.1 L1105.2 621.9 L1106.2 611.1 L1107.2 602.6 L1108.2 598.5 L1109.2 595.4 L1110.2 597.6 L1111.2 600.8 L1112.2 606.6 L1113.2 612.5 L1114.2 621.5 L1115.2 620.6 L1116.2 616.5 L1117.2 610.2 L1118.2 608.4 L1119.2 608.0 L1120.2 605.7 L1121.2 602.1 L1122.2 603.9 L1123.2 605.2 L1124.2 605.2 L1125.2 603.0 L1126.2 603.0 L1127.2 604.8 L1128.2 603.9 L1129.2 603.5 L1130.2 603.9 L1131.2 603.0 L1132.2 601.6 L1133.2 598.5 L1134.2 597.6 L1135.2 599.4 L1136.2 599.4 L1137.2 598.5 L1138.2 598.1 L1139.2 597.6 L1140.2 597.6 L1141.2 599.9 L1142.2 599.4 L1143.2 599.0 L1144.2 600.8 L1145.2 600.8 L1146.2 602.1 L1147.2 602.1 L1148.2 602.1 L1149.2 603.0 L1150.2 603.9 L1151.2 606.1 L1152.2 605.2 L1153.2 606.1 L1154.2 605.2 L1155.2 607.1 L1156.2 606.1 L1157.2 608.0 L1158.2 605.7 L1159.2 606.6 L1160.2 607.5 L1161.2 608.9 L1162.2 611.1 L1163.2 613.8 L1164.2 614.7 L1165.2 614.2 L1166.2 615.6 L1167.2 615.6 L1168.2 615.1 L1169.2 612.9 L1170.2 613.4 L1171.2 613.4 L1172.2 614.2 L1173.2 614.2 L1174.2 614.7 L1175.2 617.0 L1176.2 616.1 L1177.2 616.5 L1178.2 616.5 L1179.2 615.6 L1180.2 616.1 L1181.2 616.1 L1182.2 617.9 L1183.2 617.9 L1184.2 620.1 L1185.2 620.1 L1186.2 621.9 L1187.2 621.5 L1188.2 621.9 L1189.2 620.6 L1190.2 621.0 L1191.2 617.9 L1192.2 618.3 L1193.2 614.7 L1194.2 615.6 L1195.2 614.7 L1196.2 615.1 L1197.2 612.9 L1198.2 616.1 L1199.2 615.6 L1200.2 616.5 L1201.2 615.1 L1202.2 615.1 L1203.2 614.2 L1204.2 611.1 L1205.2 610.6 L1206.2 611.6 L1207.2 610.6 L1208.2 609.8 L1209.2 611.6 L1210.2 614.2 L1211.2 615.1 L1212.2 616.5 L1213.2 617.4 L1214.2 617.4 L1215.2 615.1 L1216.2 614.2 L1217.2 613.4 L1218.2 612.0 L1219.2 611.1 L1220.2 610.6 L1221.2 612.0 L1222.2 618.3 L1223.2 620.6 L1224.2 620.6 L1225.2 620.6 L1226.2 621.5 L1227.2 621.5 L1228.2 620.1 L1229.2 616.1 L1230.2 617.0 L1231.2 622.8 L1232.2 629.6 L1232.2 629.6" stroke="#ff0000" stroke-width="2.2" fill="none" stroke-linejoin="round" shape-rendering="geometricPrecision"/>
<rect x="1237" y="117" width="59" height="22" fill="#d6d6d6"/>
<rect x="1237" y="294" width="59" height="22" fill="#d6d6d6"/>
<rect x="1237" y="620.5" width="59" height="22" fill="#d6d6d6"/>
</svg>
<div class="clip" style="clip-path:inset(46px 5px 437px 6px)"><span class="t" style="left:49px;top:239px"><i>0</i><i>4</i></span><span class="t" style="left:90px;top:239px"><i>0</i><i>8</i></span><span class="t" style="left:121px;top:239px"><i>0</i><i>9</i></span><span class="t" style="left:182px;top:239px"><i>1</i><i>0</i></span><span class="t" style="left:243px;top:239px"><i>1</i><i>1</i></span><span class="t" style="left:301px;top:239px"><i>1</i><i>2</i></span><span class="t" style="left:357px;top:239px"><i>1</i><i>3</i></span><span class="t" style="left:416px;top:239px"><i>1</i><i>4</i></span><span class="t" style="left:462px;top:239px"><i>1</i><i>5</i></span><span class="t" style="left:489.5px;top:239px"><i>1</i><i>6</i></span><span class="t" style="left:520.5px;top:239px"><i>1</i><i>7</i></span><span class="t" style="left:580.5px;top:239px"><i>1</i><i>8</i></span><span class="t" style="left:640.5px;top:239px"><i>1</i><i>9</i></span><span class="t" style="left:701.5px;top:239px"><i>2</i><i>0</i></span><span class="t" style="left:761.5px;top:239px"><i>2</i><i>1</i></span><span class="t" style="left:823px;top:239px"><i>2</i><i>2</i></span><span class="t" style="left:884px;top:239px"><i>2</i><i>3</i></span><span class="t" style="left:945px;top:239px"><i>0</i><i>0</i></span><span class="t" style="left:1007px;top:239px"><i>0</i><i>1</i></span><span class="t" style="left:1065.5px;top:239px"><i>0</i><i>2</i></span><span class="t" style="left:1123px;top:239px"><i>0</i><i>3</i></span><span class="t" style="left:1178px;top:239px"><i>0</i><i>4</i></span><span class="t" style="left:1216px;top:239px"><i>0</i><i>5</i></span><span class="t" style="left:86.5px;top:239px"><i>0</i><i>6</i></span><span class="t" style="left:945.5px;top:223px"><i>1</i><i>6</i></span><span class="t" style="left:1238px;top:40px"><i>6</i><i>,</i><i>4</i><i>7</i><i>0</i></span><span class="t" style="left:1238px;top:91px"><i>6</i><i>,</i><i>4</i><i>6</i><i>0</i></span><span class="t" style="left:1238px;top:142px"><i>6</i><i>,</i><i>4</i><i>5</i><i>0</i></span><span class="t" style="left:1238px;top:193px"><i>6</i><i>,</i><i>4</i><i>4</i><i>0</i></span><span class="t" style="left:1238px;top:241px"><i>6</i><i>,</i><i>4</i><i>3</i><i>0</i></span><span class="tag" style="top:117px"><i>6</i><i>,</i><i>4</i><i>5</i><i>5</i></span><div class="hd" style="top:50px"><span class="j" style="width:24.00px">時刻</span><span class="l" style="width:42.00px"><i style="width:6.0px">:</i><i style="width:6.0px">0</i><i style="width:6.0px">5</i><i style="width:6.0px">:</i><i style="width:6.0px">3</i><i style="width:6.0px">0</i><i style="width:6.0px"> </i></span><span class="j" style="width:24.00px">始値</span><span class="l" style="width:42.00px"><i style="width:6.0px">:</i><i style="width:6.0px">6</i><i style="width:6.0px">,</i><i style="width:6.0px">4</i><i style="width:6.0px">5</i><i style="width:6.0px">5</i><i style="width:6.0px"> </i></span><span class="j" style="width:24.00px">高値</span><span class="l" style="width:42.00px"><i style="width:6.0px">:</i><i style="width:6.0px">6</i><i style="width:6.0px">,</i><i style="width:6.0px">4</i><i style="width:6.0px">5</i><i style="width:6.0px">5</i><i style="width:6.0px"> </i></span><span class="j" style="width:24.00px">安値</span><span class="l" style="width:42.00px"><i style="width:6.0px">:</i><i style="width:6.0px">6</i><i style="width:6.0px">,</i><i style="width:6.0px">4</i><i style="width:6.0px">5</i><i style="width:6.0px">5</i><i style="width:6.0px"> </i></span><span class="j" style="width:24.00px">終値</span><span class="l" style="width:36.00px"><i style="width:6.0px">:</i><i style="width:6.0px">6</i><i style="width:6.0px">,</i><i style="width:6.0px">4</i><i style="width:6.0px">5</i><i style="width:6.0px">5</i></span></div></div><div class="clip" style="clip-path:inset(259px 5px 180px 6px)"><span class="t" style="left:49px;top:496px"><i>0</i><i>4</i></span><span class="t" style="left:90px;top:496px"><i>0</i><i>8</i></span><span class="t" style="left:121px;top:496px"><i>0</i><i>9</i></span><span class="t" style="left:182px;top:496px"><i>1</i><i>0</i></span><span class="t" style="left:243px;top:496px"><i>1</i><i>1</i></span><span class="t" style="left:301px;top:496px"><i>1</i><i>2</i></span><span class="t" style="left:357px;top:496px"><i>1</i><i>3</i></span><span class="t" style="left:416px;top:496px"><i>1</i><i>4</i></span><span class="t" style="left:462px;top:496px"><i>1</i><i>5</i></span><span class="t" style="left:489.5px;top:496px"><i>1</i><i>6</i></span><span class="t" style="left:520.5px;top:496px"><i>1</i><i>7</i></span><span class="t" style="left:580.5px;top:496px"><i>1</i><i>8</i></span><span class="t" style="left:640.5px;top:496px"><i>1</i><i>9</i></span><span class="t" style="left:701.5px;top:496px"><i>2</i><i>0</i></span><span class="t" style="left:761.5px;top:496px"><i>2</i><i>1</i></span><span class="t" style="left:823px;top:496px"><i>2</i><i>2</i></span><span class="t" style="left:884px;top:496px"><i>2</i><i>3</i></span><span class="t" style="left:945px;top:496px"><i>0</i><i>0</i></span><span class="t" style="left:1007px;top:496px"><i>0</i><i>1</i></span><span class="t" style="left:1065.5px;top:496px"><i>0</i><i>2</i></span><span class="t" style="left:1123px;top:496px"><i>0</i><i>3</i></span><span class="t" style="left:1178px;top:496px"><i>0</i><i>4</i></span><span class="t" style="left:1216px;top:496px"><i>0</i><i>5</i></span><span class="t" style="left:86.5px;top:496px"><i>0</i><i>6</i></span><span class="t" style="left:945.5px;top:480px"><i>1</i><i>6</i></span><span class="t" style="left:1238px;top:266px"><i>4</i><i>,</i><i>0</i><i>2</i><i>5</i></span><span class="t" style="left:1238px;top:336px"><i>4</i><i>,</i><i>0</i><i>0</i><i>0</i></span><span class="t" style="left:1238px;top:408px"><i>3</i><i>,</i><i>9</i><i>7</i><i>5</i></span><span class="t" style="left:1238px;top:478px"><i>3</i><i>,</i><i>9</i><i>5</i><i>0</i></span><span class="tag" style="top:294px"><i>4</i><i>,</i><i>0</i><i>1</i><i>5</i></span><div class="hd" style="top:263px"><span class="j" style="width:24.00px">時刻</span><span class="l" style="width:42.00px"><i style="width:6.0px">:</i><i style="width:6.0px">0</i><i style="width:6.0px">5</i><i style="width:6.0px">:</i><i style="width:6.0px">3</i><i style="width:6.0px">0</i><i style="width:6.0px"> </i></span><span class="j" style="width:24.00px">始値</span><span class="l" style="width:42.00px"><i style="width:6.0px">:</i><i style="width:6.0px">4</i><i style="width:6.0px">,</i><i style="width:6.0px">0</i><i style="width:6.0px">1</i><i style="width:6.0px">5</i><i style="width:6.0px"> </i></span><span class="j" style="width:24.00px">高値</span><span class="l" style="width:42.00px"><i style="width:6.0px">:</i><i style="width:6.0px">4</i><i style="width:6.0px">,</i><i style="width:6.0px">0</i><i style="width:6.0px">1</i><i style="width:6.0px">5</i><i style="width:6.0px"> </i></span><span class="j" style="width:24.00px">安値</span><span class="l" style="width:42.00px"><i style="width:6.0px">:</i><i style="width:6.0px">4</i><i style="width:6.0px">,</i><i style="width:6.0px">0</i><i style="width:6.0px">1</i><i style="width:6.0px">5</i><i style="width:6.0px"> </i></span><span class="j" style="width:24.00px">終値</span><span class="l" style="width:36.00px"><i style="width:6.0px">:</i><i style="width:6.0px">4</i><i style="width:6.0px">,</i><i style="width:6.0px">0</i><i style="width:6.0px">1</i><i style="width:6.0px">5</i></span></div></div><div class="clip" style="clip-path:inset(516px 5px 7px 6px)"><span class="t" style="left:49px;top:670px"><i>0</i><i>4</i></span><span class="t" style="left:90px;top:670px"><i>0</i><i>8</i></span><span class="t" style="left:121px;top:670px"><i>0</i><i>9</i></span><span class="t" style="left:182px;top:670px"><i>1</i><i>0</i></span><span class="t" style="left:243px;top:670px"><i>1</i><i>1</i></span><span class="t" style="left:301px;top:670px"><i>1</i><i>2</i></span><span class="t" style="left:357px;top:670px"><i>1</i><i>3</i></span><span class="t" style="left:416px;top:670px"><i>1</i><i>4</i></span><span class="t" style="left:462px;top:670px"><i>1</i><i>5</i></span><span class="t" style="left:489.5px;top:670px"><i>1</i><i>6</i></span><span class="t" style="left:520.5px;top:670px"><i>1</i><i>7</i></span><span class="t" style="left:580.5px;top:670px"><i>1</i><i>8</i></span><span class="t" style="left:640.5px;top:670px"><i>1</i><i>9</i></span><span class="t" style="left:701.5px;top:670px"><i>2</i><i>0</i></span><span class="t" style="left:761.5px;top:670px"><i>2</i><i>1</i></span><span class="t" style="left:823px;top:670px"><i>2</i><i>2</i></span><span class="t" style="left:884px;top:670px"><i>2</i><i>3</i></span><span class="t" style="left:945px;top:670px"><i>0</i><i>0</i></span><span class="t" style="left:1007px;top:670px"><i>0</i><i>1</i></span><span class="t" style="left:1065.5px;top:670px"><i>0</i><i>2</i></span><span class="t" style="left:1123px;top:670px"><i>0</i><i>3</i></span><span class="t" style="left:1178px;top:670px"><i>0</i><i>4</i></span><span class="t" style="left:1216px;top:670px"><i>0</i><i>5</i></span><span class="t" style="left:86.5px;top:670px"><i>0</i><i>6</i></span><span class="t" style="left:945.5px;top:654px"><i>1</i><i>6</i></span><span class="t" style="left:1238px;top:511px"><i>2</i><i>,</i><i>5</i><i>0</i><i>0</i></span><span class="t" style="left:1238px;top:556px"><i>2</i><i>,</i><i>4</i><i>7</i><i>5</i></span><span class="t" style="left:1238px;top:601px"><i>2</i><i>,</i><i>4</i><i>5</i><i>0</i></span><span class="t" style="left:1238px;top:646px"><i>2</i><i>,</i><i>4</i><i>2</i><i>5</i></span><span class="tag" style="top:620px"><i>2</i><i>,</i><i>4</i><i>4</i><i>0</i></span><div class="hd" style="top:520px"><span class="l" style="width:6.14px"><i style="width:6.14px">[</i></span><span class="j" style="width:12.28px">金</span><span class="l" style="width:73.68px"><i style="width:6.14px"> </i><i style="width:6.14px">2</i><i style="width:6.14px">2</i><i style="width:6.14px">/</i><i style="width:6.14px">0</i><i style="width:6.14px">6</i><i style="width:6.14px"> </i><i style="width:6.14px">6</i><i style="width:6.14px">,</i><i style="width:6.14px">4</i><i style="width:6.14px">5</i><i style="width:6.14px">5</i></span><span class="j" style="width:12.28px">×</span><span class="l" style="width:30.70px"><i style="width:6.14px">1</i><i style="width:6.14px">.</i><i style="width:6.14px">0</i><i style="width:6.14px">0</i><i style="width:6.14px">]</i></span><span class="j" style="width:12.28px">－</span><span class="l" style="width:6.14px"><i style="width:6.14px">[</i></span><span class="j" style="width:24.56px">白金</span><span class="l" style="width:73.68px"><i style="width:6.14px"> </i><i style="width:6.14px">2</i><i style="width:6.14px">2</i><i style="width:6.14px">/</i><i style="width:6.14px">0</i><i style="width:6.14px">6</i><i style="width:6.14px"> </i><i style="width:6.14px">4</i><i style="width:6.14px">,</i><i style="width:6.14px">0</i><i style="width:6.14px">1</i><i style="width:6.14px">5</i></span><span class="j" style="width:12.28px">×</span><span class="l" style="width:36.84px"><i style="width:6.14px">1</i><i style="width:6.14px">.</i><i style="width:6.14px">0</i><i style="width:6.14px">0</i><i style="width:6.14px">]</i><i style="width:6.14px"> </i></span><span class="j" style="width:24.56px">終値</span><span class="l" style="width:6.14px"><i style="width:6.14px"> </i></span><span class="j" style="width:24.56px">時刻</span><span class="l" style="width:73.68px"><i style="width:6.14px">:</i><i style="width:6.14px">0</i><i style="width:6.14px">5</i><i style="width:6.14px">:</i><i style="width:6.14px">3</i><i style="width:6.14px">0</i><i style="width:6.14px"> </i><i style="width:6.14px">2</i><i style="width:6.14px">,</i><i style="width:6.14px">4</i><i style="width:6.14px">4</i><i style="width:6.14px">0</i></span></div></div>
</body></html>
